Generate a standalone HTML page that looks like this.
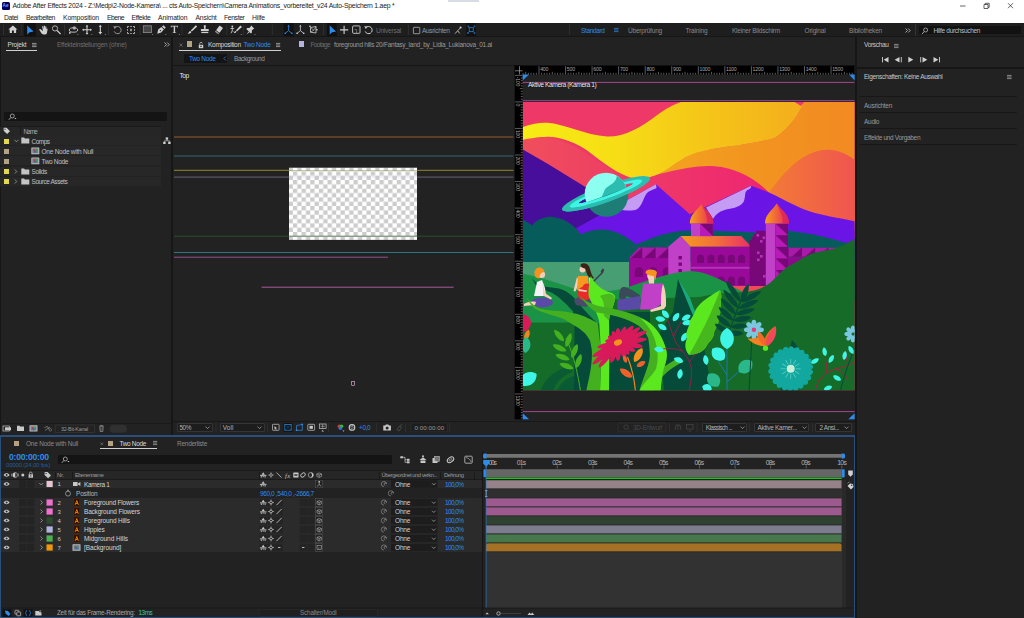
<!DOCTYPE html>
<html><head><meta charset="utf-8">
<style>
html,body{margin:0;padding:0;}
body{width:1024px;height:618px;overflow:hidden;position:relative;background:#161616;font-family:"Liberation Sans",sans-serif;font-size:6.7px;color:#b4b4b4;}
.a{position:absolute;}
.t{position:absolute;white-space:pre;line-height:8px;height:8px;}
.p{position:absolute;background:#222222;}
svg{position:absolute;overflow:visible;}
</style></head><body>
<div class="a" style="left:0;top:0;width:1024px;height:23px;background:#fff;"></div>
<div class="a" style="left:448px;top:0;width:31px;height:1.5px;background:#d9dce6;"></div>
<div class="a" style="left:1.5px;top:1.5px;width:8px;height:8px;background:#00005b;border-radius:1.5px;"></div>
<div class="t" style="left:2.60px;top:2.10px;color:#9999ff;font-size:4.60px;letter-spacing:0.062px;font-weight:700;">Ae</div>
<div class="t" style="left:12.50px;top:2.10px;color:#1a1a1a;font-size:6.80px;letter-spacing:-0.204px;">Adobe After Effects 2024 - Z:\Medp\2-Node-Kamera\ ... cts Auto-Speichern\Camera Animations_vorbereitet_v24 Auto-Speichern 1.aep *</div>
<svg style="left:955px;top:0" width="69" height="12" viewBox="0 0 69 12"><path d="M5 6H10.5" stroke="#222" stroke-width="0.7" fill="none"/><path d="M29 4.5h4v4h-4z M30.2 4.5v-1.2h4v4h-1.2" stroke="#222" stroke-width="0.7" fill="none"/><path d="M53 3.2l5 5M58 3.2l-5 5" stroke="#222" stroke-width="0.7" fill="none"/></svg>
<div class="t" style="left:4.00px;top:14.00px;color:#1a1a1a;font-size:6.80px;letter-spacing:-0.375px;">Datei</div>
<div class="t" style="left:26.00px;top:14.00px;color:#1a1a1a;font-size:6.80px;letter-spacing:-0.389px;">Bearbeiten</div>
<div class="t" style="left:63.00px;top:14.00px;color:#1a1a1a;font-size:6.80px;letter-spacing:-0.128px;">Komposition</div>
<div class="t" style="left:107.00px;top:14.00px;color:#1a1a1a;font-size:6.80px;letter-spacing:-0.531px;">Ebene</div>
<div class="t" style="left:131.50px;top:14.00px;color:#1a1a1a;font-size:6.80px;letter-spacing:-0.292px;">Effekte</div>
<div class="t" style="left:158.00px;top:14.00px;color:#1a1a1a;font-size:6.80px;letter-spacing:-0.082px;">Animation</div>
<div class="t" style="left:195.50px;top:14.00px;color:#1a1a1a;font-size:6.80px;letter-spacing:-0.185px;">Ansicht</div>
<div class="t" style="left:224.00px;top:14.00px;color:#1a1a1a;font-size:6.80px;letter-spacing:-0.364px;">Fenster</div>
<div class="t" style="left:252.00px;top:14.00px;color:#1a1a1a;font-size:6.80px;letter-spacing:-0.122px;">Hilfe</div>
<div class="a" style="left:0;top:23px;width:1024px;height:12.700px;background:#1e1e1e;"></div>
<svg style="left:0;top:23px" width="1024" height="14" viewBox="0 23 1024 14"><path d="M3.5 24.5V35" stroke="#3a3a3a" stroke-width="0.6"/><path d="M21.7 24.5V35" stroke="#3a3a3a" stroke-width="0.6"/><path d="M64.5 24.5V35" stroke="#3a3a3a" stroke-width="0.6"/><path d="M108.5 24.5V35" stroke="#3a3a3a" stroke-width="0.6"/><path d="M140.0 24.5V35" stroke="#3a3a3a" stroke-width="0.6"/><path d="M182.0 24.5V35" stroke="#3a3a3a" stroke-width="0.6"/><path d="M226.8 24.5V35" stroke="#3a3a3a" stroke-width="0.6"/><path d="M243.6 24.5V35" stroke="#3a3a3a" stroke-width="0.6"/><path d="M272.3 24.5V35" stroke="#3a3a3a" stroke-width="0.6"/><path d="M323.5 24.5V35" stroke="#3a3a3a" stroke-width="0.6"/><path d="M408.4 24.5V35" stroke="#3a3a3a" stroke-width="0.6"/><path d="M12.9 25.6L8.4 29.6H9.7V33.1H11.9V30.6H13.9V33.1H16.1V29.6H17.4Z" fill="#d0d0d0"/><rect x="24" y="23" width="12" height="13.3" fill="#111"/><path d="M27.2 25.4V34.4L29.6 32.3L33.6 31.6Z" fill="#2d8ceb"/><path d="M40.6 29.3c-.6-.6-1.6-.2-1.2.8l2 3.2c.5.8 1.3 1.1 2.2 1.1h1.6c1 0 1.6-.7 1.8-1.6l.6-3.6c.1-.8-.9-1-1.1-.2l-.2 1 .1-3.200c0-.8-1.100-.8-1.100 0l-.1 2.200-.3-3c-.1-.8-1.100-.7-1.100 .1l.1 2.900-.7-2.500c-.2-.8-1.200-.5-1 .3l.8 4.200z" fill="#d0d0d0"/><circle cx="55" cy="28.4" r="2.6" fill="none" stroke="#d0d0d0" stroke-width="0.8"/><path d="M57 30.500L60.600 34" stroke="#d0d0d0" stroke-width="1.100"/><ellipse cx="73.5" cy="30" rx="4.2" ry="2.2" fill="none" stroke="#d0d0d0" stroke-width="0.900"/><circle cx="74.300" cy="28" r="1.700" fill="#aaa"/><path d="M69 31.500l.2 2.400 2.200-1z" fill="#d0d0d0"/><path d="M78.200 33.700v1.200h-1.200z" fill="#999"/><path d="M87 25.600V34M82.800 29.800H91.200" stroke="#d0d0d0" stroke-width="1.100"/><path d="M87 24.900l1.400 1.700h-2.800zM87 34.700l1.400-1.700h-2.800zM82.100 29.800l1.700-1.400v2.800zM91.900 29.800l-1.700-1.400v2.800z" fill="#d0d0d0"/><path d="M92.200 33.700v1.200h-1.200z" fill="#999"/><path d="M100.300 26V33" stroke="#d0d0d0" stroke-width="1.100"/><path d="M100.300 24.800l1.600 2h-3.200zM100.300 34.400l1.900-2.300h-3.800z" fill="#d0d0d0"/><path d="M105.700 33.700v1.200h-1.200z" fill="#999"/><path d="M114.600 28A3.600 3.600 0 1 1 114.200 31.400" fill="none" stroke="#a0a0a0" stroke-width="0.900"/><path d="M113.200 26.300l2.900 .1-1.100 2.600z" fill="#a0a0a0"/><path d="M127.500 26.500h1.500M130.200 26.500h1.600M133 26.500h1.500v1.500M134.500 29.200v1.600M134.500 32v1.500H133M131.800 33.500h-1.600M129 33.500h-1.500V32M127.500 30.800v-1.600M127.500 28v-1.500" stroke="#d0d0d0" stroke-width="0.800" fill="none"/><path d="M131 28.200l.9 1.800-0.900 1.800-.9-1.800z" fill="#d0d0d0"/><rect x="143.300" y="25.800" width="8.200" height="6.800" fill="#454545" stroke="#8c8c8c" stroke-width="0.800"/><path d="M152.800 33.700v1.200h-1.200z" fill="#999"/><path d="M157.200 33.800l1-4.200 3.200-2.600 2.400 2.400-2.600 3.200z" fill="#d0d0d0"/><path d="M162 26.400l1.400-1.200 2.300 2.300-1.200 1.400z" fill="#d0d0d0"/><circle cx="160.400" cy="30.600" r=".7" fill="#1d1d1d"/><path d="M166.200 33.700v1.200h-1.200z" fill="#999"/><path d="M170.800 25.700h7.200v1.800h-.6l-.3-.9h-2v5.800l1 .2v.5h-3.400v-.5l1-.2v-5.800h-2l-.3 .9h-.6z" fill="#d0d0d0"/><path d="M179.800 33.700v1.200h-1.200z" fill="#999"/><path d="M195.800 25.200l-5 5.400 1 1 5.400-5z" fill="#d0d0d0"/><path d="M190.300 31.100c-1.200 .2-1.300 1.600-2.600 2.500 1.600 .3 3.400-.3 3.600-1.500z" fill="#d0d0d0"/><path d="M203.700 25.300h2.200l-.4 3.700h3.200v1.900h-7.800v-1.900h3.200z" fill="#d0d0d0"/><rect x="201.300" y="31.800" width="7" height="1.300" fill="#d0d0d0"/><path d="M219.600 25.400l3.400 2.500-3.500 4.800-3.400-2.500z" fill="#d0d0d0"/><path d="M215.700 30.800l3.400 2.500-.8 1-3.400-2.500z" fill="#999"/><path d="M240.400 25.400l-4.500 5.200 .9 .8 5.200-4.500z" fill="#d0d0d0"/><path d="M235.500 31c-1 .2-1 1.300-2 2 1.300 .2 2.700-.2 2.800-1.200z" fill="#d0d0d0"/><circle cx="232.300" cy="26.400" r=".9" fill="#d0d0d0"/><path d="M230.400 28.500h3.800M232.300 27.300v3.200l-1.300 2.800M232.300 30.500l1 1.200" stroke="#d0d0d0" stroke-width=".8" fill="none"/><path d="M241.600 33.700v1.200h-1.200z" fill="#999"/><path d="M251 25.300l3.400 3.400-1 .3-1.600 1.600 .1 2-1 .9-4.600-4.600 .9-1 2 .1 1.600-1.600z" fill="#d0d0d0"/><path d="M248.700 31.400l-1.800 2.400 .2 .2 2.400-1.800z" fill="#d0d0d0"/><path d="M255.400 33.700v1.200h-1.200z" fill="#999"/><rect x="283.700" y="23" width="9.900" height="13.300" fill="#111"/><path d="M288.6 26.200V30.600L285.4 33.300M288.6 30.600L291.8 33.300" stroke="#2d8ceb" stroke-width=".8" fill="none"/><path d="M288.6 24.700l1.200 1.700h-2.400z" fill="#2d8ceb"/><rect x="284.6" y="32.600" width="1.400" height="1.400" fill="#2d8ceb"/><rect x="291.2" y="32.600" width="1.400" height="1.400" fill="#2d8ceb"/><path d="M300.4 26.200V30.600L297.2 33.300M300.4 30.600L303.6 33.300" stroke="#d0d0d0" stroke-width=".8" fill="none"/><path d="M300.4 24.700l1.200 1.700h-2.400z" fill="#d0d0d0"/><rect x="296.4" y="32.600" width="1.400" height="1.400" fill="#d0d0d0"/><rect x="303.0" y="32.600" width="1.400" height="1.400" fill="#d0d0d0"/><path d="M310.500 27.500l5.500-1v6.500l-5.500-.8z" fill="none" stroke="#d0d0d0" stroke-width=".8"/><path d="M310.500 27.500l3.300 2.700 2.200-3.700M310.500 32.200l3.300-2" stroke="#d0d0d0" stroke-width=".6" fill="none"/><rect x="309.200" y="25.600" width="1.400" height="1.400" fill="#d0d0d0"/><rect x="316.200" y="29" width="1.400" height="1.400" fill="#d0d0d0"/><rect x="327" y="23" width="9.700" height="13.300" fill="#111"/><path d="M329.700 25.400V34.400L332.100 32.300L336 31.600Z" fill="#2d8ceb"/><path d="M344.100 25.800V34M340 29.900H348.200" stroke="#d0d0d0" stroke-width="1.100"/><rect x="352.600" y="25.900" width="7.400" height="7.400" rx=".8" fill="none" stroke="#d0d0d0" stroke-width=".9"/><path d="M354.600 29.600h2v3.400" stroke="#999" stroke-width=".6" fill="none"/><path d="M365.600 28A3.600 3.600 0 1 1 365.200 31.400" fill="none" stroke="#d0d0d0" stroke-width="1"/><path d="M364.200 26.300l2.900 .1-1.100 2.600z" fill="#d0d0d0"/><rect x="413.400" y="27.300" width="6.400" height="6.400" rx=".6" fill="none" stroke="#b0b0b0" stroke-width=".8"/><path d="M455 33.700l2.700-3 2 2.700M457.700 30.700l2.600-2.700" stroke="#d0d0d0" stroke-width=".8" fill="none"/><circle cx="460.600" cy="27.600" r="1" fill="#d0d0d0"/><rect x="466" y="23" width="10" height="13.300" fill="#111"/><rect x="469.200" y="27.700" width="4" height="4" fill="none" stroke="#2d8ceb" stroke-width=".700"/><path d="M467.800 26.300l1.400 1.400M474.600 26.300l-1.400 1.400M467.800 33.100l1.400-1.400M474.600 33.100l-1.400-1.400" stroke="#2d8ceb" stroke-width=".700"/><path d="M467.400 25.900h1.300v1.300M475 25.900h-1.300M475 25.900v1.300M467.400 33.500h1.300M467.400 33.500v-1.300M475 33.500h-1.300M475 33.500v-1.300" stroke="#2d8ceb" stroke-width=".6" fill="none"/></svg>
<div class="t" style="left:376.00px;top:26.80px;color:#6e6e6e;font-size:6.50px;letter-spacing:-0.233px;">Universal</div>
<div class="t" style="left:422.00px;top:26.80px;color:#9a9a9a;font-size:6.50px;letter-spacing:-0.312px;">Ausrichten</div>
<div class="a" style="left:569px;top:24px;width:.6px;height:11px;background:#2c2c2c"></div>
<div class="t" style="left:581.00px;top:26.80px;color:#2d8ceb;font-size:6.50px;letter-spacing:-0.361px;">Standard</div>
<svg style="left:613.500px;top:28.300px" width="5" height="4" viewBox="0 0 5 4"><path d="M0 .4h4.500M0 2h4.500M0 3.600h4.500" stroke="#2d8ceb" stroke-width=".7"/></svg>
<div class="t" style="left:628.00px;top:26.80px;color:#8a8a8a;font-size:6.50px;letter-spacing:-0.195px;">Überprüfung</div>
<div class="t" style="left:685.50px;top:26.80px;color:#8a8a8a;font-size:6.50px;letter-spacing:-0.156px;">Training</div>
<div class="t" style="left:732.00px;top:26.80px;color:#8a8a8a;font-size:6.50px;letter-spacing:-0.224px;">Kleiner Bildschirm</div>
<div class="t" style="left:804.50px;top:26.80px;color:#8a8a8a;font-size:6.50px;letter-spacing:-0.176px;">Original</div>
<div class="t" style="left:849.00px;top:26.80px;color:#8a8a8a;font-size:6.50px;letter-spacing:-0.202px;">Bibliotheken</div>
<svg style="left:905px;top:27.500px" width="6" height="5" viewBox="0 0 6 5"><path d="M.5 .5l2 2-2 2M3.200 .5l2 2-2 2" stroke="#c8c8c8" stroke-width=".8" fill="none"/></svg>
<div class="a" style="left:914.500px;top:24px;width:.6px;height:12px;background:#333"></div>
<div class="a" style="left:918.500px;top:26px;width:102px;height:8.300px;background:#121212;border-radius:1px;"></div>
<svg style="left:921px;top:26.500px" width="8" height="8" viewBox="0 0 8 8"><circle cx="4.600" cy="3" r="2" fill="none" stroke="#c8c8c8" stroke-width=".7"/><path d="M3.200 4.500L1 7" stroke="#c8c8c8" stroke-width=".8"/></svg>
<div class="t" style="left:933.50px;top:26.80px;color:#c0c0c0;font-size:6.50px;letter-spacing:-0.325px;">Hilfe durchsuchen</div>
<div class="p" style="left:1px;top:37px;width:170px;height:397.500px;"></div>
<div class="t" style="left:7.50px;top:41.30px;color:#d8d8d8;font-size:6.50px;letter-spacing:-0.205px;">Projekt</div>
<svg style="left:32.300px;top:43px" width="5" height="4" viewBox="0 0 5 4"><path d="M0 .4h4.600M0 2h4.600M0 3.600h4.600" stroke="#c0c0c0" stroke-width=".7"/></svg>
<div class="a" style="left:6.300px;top:50px;width:30.700px;height:1px;background:#d0d0d0;"></div>
<div class="t" style="left:57.00px;top:41.30px;color:#6e6e6e;font-size:6.50px;letter-spacing:-0.227px;">Effekteinstellungen (ohne)</div>
<svg style="left:163.500px;top:41.800px" width="6" height="5" viewBox="0 0 6 5"><path d="M.5 .5l2 2-2 2M3.200 .5l2 2-2 2" stroke="#c8c8c8" stroke-width=".8" fill="none"/></svg>
<div class="a" style="left:4.300px;top:112px;width:163px;height:9.300px;background:#141414;border-radius:1px;"></div>
<svg style="left:7.500px;top:113px" width="10" height="8" viewBox="0 0 10 8"><circle cx="4.300" cy="3" r="2" fill="none" stroke="#c8c8c8" stroke-width=".7"/><path d="M2.900 4.500L.8 6.800" stroke="#c8c8c8" stroke-width=".8"/><path d="M6.300 5l1.100 1.200 1.100-1.200z" fill="#c8c8c8"/></svg>
<div class="a" style="left:0;top:126px;width:160.700px;height:9.500px;background:#262626;border-top:.5px solid #1a1a1a;border-bottom:.5px solid #1a1a1a;"></div>
<svg style="left:3px;top:127px" width="8" height="8" viewBox="0 0 8 8"><path d="M.6 .8h3l3.400 3.400-2.900 2.900L.7 3.700z" fill="#d0d0d0"/><circle cx="2" cy="2.200" r=".6" fill="#232323"/></svg>
<div class="a" style="left:20.200px;top:127px;width:.6px;height:8px;background:#1a1a1a"></div>
<div class="t" style="left:23.50px;top:127.60px;color:#a8a8a8;font-size:6.30px;letter-spacing:-0.824px;">Name</div>
<div class="a" style="left:0;top:136.3px;width:160.700px;height:9.200px;background:#272727;"></div>
<div class="a" style="left:3.600px;top:138.5px;width:5px;height:5px;background:#e4d84c;"></div>
<svg style="left:14px;top:139.2px" width="5" height="4" viewBox="0 0 5 4"><path d="M.5 .8l2 2 2-2" stroke="#b0b0b0" stroke-width=".7" fill="none"/></svg>
<svg style="left:21px;top:137.4px" width="9" height="7" viewBox="0 0 9 7"><path d="M.3 .6h2.800l.8 .9h4.400v5H.3z" fill="#c4c4c4"/></svg>
<div class="t" style="left:31.50px;top:137.60px;color:#c0c0c0;font-size:6.50px;letter-spacing:-0.519px;">Comps</div>
<div class="a" style="left:0;top:146.3px;width:160.700px;height:9.200px;background:#272727;"></div>
<div class="a" style="left:3.600px;top:148.5px;width:5px;height:5px;background:#b3a384;"></div>
<svg style="left:31px;top:147.1px" width="9" height="8" viewBox="0 0 9 8"><rect x=".3" y=".4" width="8" height="6.800" rx=".5" fill="#bdbdbd"/><rect x="1.300" y="1.400" width="6" height="4.800" fill="#6d7d8c"/><circle cx="3.500" cy="3.300" r="1.100" fill="#d33"/><circle cx="5" cy="3.300" r="1.100" fill="#3a3"/><circle cx="4.300" cy="4.600" r="1.100" fill="#36c"/></svg>
<div class="t" style="left:41.50px;top:147.60px;color:#c0c0c0;font-size:6.50px;letter-spacing:-0.233px;">One Node with Null</div>
<div class="a" style="left:0;top:156.3px;width:160.700px;height:9.200px;background:#272727;"></div>
<div class="a" style="left:3.600px;top:158.5px;width:5px;height:5px;background:#b3a384;"></div>
<svg style="left:31px;top:157.1px" width="9" height="8" viewBox="0 0 9 8"><rect x=".3" y=".4" width="8" height="6.800" rx=".5" fill="#bdbdbd"/><rect x="1.300" y="1.400" width="6" height="4.800" fill="#6d7d8c"/><circle cx="3.500" cy="3.300" r="1.100" fill="#d33"/><circle cx="5" cy="3.300" r="1.100" fill="#3a3"/><circle cx="4.300" cy="4.600" r="1.100" fill="#36c"/></svg>
<div class="t" style="left:41.50px;top:157.60px;color:#c0c0c0;font-size:6.50px;letter-spacing:-0.348px;">Two Node</div>
<div class="a" style="left:0;top:166.6px;width:160.700px;height:9.200px;background:#272727;"></div>
<div class="a" style="left:3.600px;top:168.8px;width:5px;height:5px;background:#e4d84c;"></div>
<svg style="left:14.300px;top:168.8px" width="4" height="5" viewBox="0 0 4 5"><path d="M.8 .5l2 2-2 2" stroke="#b0b0b0" stroke-width=".7" fill="none"/></svg>
<svg style="left:21px;top:167.7px" width="9" height="7" viewBox="0 0 9 7"><path d="M.3 .6h2.800l.8 .9h4.400v5H.3z" fill="#c4c4c4"/></svg>
<div class="t" style="left:31.50px;top:167.90px;color:#c0c0c0;font-size:6.50px;letter-spacing:-0.403px;">Solids</div>
<div class="a" style="left:0;top:176.7px;width:160.700px;height:9.200px;background:#272727;"></div>
<div class="a" style="left:3.600px;top:178.9px;width:5px;height:5px;background:#e4d84c;"></div>
<svg style="left:14.300px;top:178.9px" width="4" height="5" viewBox="0 0 4 5"><path d="M.8 .5l2 2-2 2" stroke="#b0b0b0" stroke-width=".7" fill="none"/></svg>
<svg style="left:21px;top:177.8px" width="9" height="7" viewBox="0 0 9 7"><path d="M.3 .6h2.800l.8 .9h4.400v5H.3z" fill="#c4c4c4"/></svg>
<div class="t" style="left:31.50px;top:178.00px;color:#c0c0c0;font-size:6.50px;letter-spacing:-0.443px;">Source Assets</div>
<svg style="left:162.500px;top:137px" width="8" height="8" viewBox="0 0 8 8"><rect x="2.700" y=".4" width="2.400" height="2.300" fill="#d0d0d0"/><rect x=".2" y="4.700" width="2.400" height="2.300" fill="#d0d0d0"/><rect x="5.200" y="4.700" width="2.400" height="2.300" fill="#d0d0d0"/><path d="M3.900 2.700v1.200M1.400 4.700v-.9h5v.9" stroke="#d0d0d0" stroke-width=".6" fill="none"/></svg>
<div class="a" style="left:0;top:423px;width:171px;height:.6px;background:#1a1a1a"></div>
<svg style="left:0;top:423px" width="171" height="11" viewBox="0 423 171 11"><rect x="3" y="426" width="6.500" height="5" fill="none" stroke="#c8c8c8" stroke-width=".7"/><rect x="5" y="427.300" width="6" height="3" fill="#c8c8c8"/><path d="M17 425.800h2.500l.7 .8h3.800v4.400h-7z" fill="#c8c8c8"/><rect x="29.500" y="425.300" width="8" height="6.300" rx=".5" fill="#bdbdbd"/><rect x="30.500" y="426.300" width="6" height="4.300" fill="#6d7d8c"/><circle cx="32.700" cy="428" r="1" fill="#d33"/><circle cx="34.200" cy="428" r="1" fill="#3a3"/><circle cx="33.500" cy="429.300" r="1" fill="#36c"/><path d="M44.500 427.500l3-1 1.200 2.500M45 430.500l5-3.500" stroke="#8a8a8a" stroke-width=".7" fill="none"/><circle cx="50.300" cy="429.800" r="1.300" fill="none" stroke="#8a8a8a" stroke-width=".6"/><rect x="55.200" y="425" width="39.600" height="7.400" fill="none" stroke="#3a3a3a" stroke-width=".6"/><path d="M99.200 426.300h4.600M100.500 426.300v-.8h2v.8M99.800 426.800l.4 4.700h2.600l.4-4.700" stroke="#9a9a9a" stroke-width=".7" fill="none"/><path d="M100.900 427.300v3.500M102.100 427.300v3.500" stroke="#9a9a9a" stroke-width=".4"/><rect x="109.500" y="424.700" width="17.500" height="8" rx="4" fill="#303030"/></svg>
<div class="t" style="left:61.00px;top:425.30px;color:#9a9a9a;font-size:5.30px;letter-spacing:-0.180px;">32-Bit-Kanal</div>
<div class="p" style="left:173.200px;top:37px;width:681.800px;height:397.500px;"></div>
<div class="a" style="left:173.200px;top:64.900px;width:681.800px;height:1px;background:#161616;"></div>
<svg style="left:178.800px;top:43.300px" width="4" height="4" viewBox="0 0 4 4"><path d="M.5 .5l3 3M3.500 .5l-3 3" stroke="#8a8a8a" stroke-width=".6"/></svg>
<div class="a" style="left:186.800px;top:41.400px;width:5.600px;height:5.600px;background:#b3a384;"></div>
<svg style="left:197.500px;top:41.500px" width="6" height="7" viewBox="0 0 6 7"><rect x=".8" y="2.800" width="4.400" height="3.400" fill="#d0d0d0"/><path d="M1.700 2.800v-1.200a1.300 1.300 0 0 1 2.600 0" stroke="#d0d0d0" stroke-width=".7" fill="none"/><rect x="2.400" y="3.700" width="1.200" height="1.400" fill="#1f1f1f"/></svg>
<div class="t" style="left:208.00px;top:41.30px;color:#d8d8d8;font-size:6.50px;letter-spacing:-0.271px;">Komposition</div>
<div class="t" style="left:243.50px;top:41.30px;color:#2d8ceb;font-size:6.50px;letter-spacing:-0.285px;">Two Node</div>
<svg style="left:275.800px;top:43px" width="5" height="4" viewBox="0 0 5 4"><path d="M0 .4h4.200M0 2h4.200M0 3.600h4.200" stroke="#c0c0c0" stroke-width=".7"/></svg>
<div class="a" style="left:179px;top:50px;width:101.500px;height:1px;background:#d0d0d0;"></div>
<div class="a" style="left:298.800px;top:41.400px;width:5.600px;height:5.600px;background:#b4b4e0;"></div>
<div class="t" style="left:310.50px;top:41.30px;color:#6e6e6e;font-size:6.50px;letter-spacing:-0.623px;">Footage</div>
<div class="t" style="left:334.00px;top:41.30px;color:#9a9a9a;font-size:6.50px;letter-spacing:-0.265px;">foreground hills 20/Fantasy_land_by_Lidia_Lukianova_01.ai</div>
<div class="a" style="left:183.500px;top:53.700px;width:43.500px;height:9px;background:#141414;"></div>
<div class="t" style="left:189.00px;top:54.70px;color:#2d8ceb;font-size:6.50px;letter-spacing:-0.348px;">Two Node</div>
<svg style="left:222.500px;top:55.800px" width="4" height="5" viewBox="0 0 4 5"><path d="M2.800 .5l-2 2 2 2" stroke="#2d8ceb" stroke-width=".7" fill="none"/></svg>
<div class="t" style="left:234.00px;top:54.70px;color:#9a9a9a;font-size:6.50px;letter-spacing:-0.420px;">Background</div>
<div class="t" style="left:179.50px;top:72.30px;color:#f0f0f0;font-size:6.60px;letter-spacing:-0.447px;text-shadow:0 0 .8px #000;">Top</div>
<svg style="left:0;top:0" width="1024" height="618" viewBox="0 0 1024 618"><defs><pattern id="ck" x="292.900" y="171.400" width="8.660" height="8.660" patternUnits="userSpaceOnUse"><rect width="8.660" height="8.660" fill="#fff"/><rect width="4.330" height="4.330" fill="#ccc"/><rect x="4.330" y="4.330" width="4.330" height="4.330" fill="#ccc"/></pattern></defs><path d="M174.0 137.0H513.5" stroke="#b5682d" stroke-width=".800"/><path d="M174.0 156.0H513.5" stroke="#2f7f88" stroke-width=".800"/><path d="M174.0 170.3H513.5" stroke="#a9a432" stroke-width=".800"/><path d="M174.0 177.1H513.5" stroke="#747488" stroke-width=".800"/><rect x="289" y="167.700" width="128" height="72.200" fill="url(#ck)"/><path d="M289 170.500H417" stroke="#8a9a3a" stroke-width=".6" opacity=".8"/><path d="M289 177H417" stroke="#b0b0d0" stroke-width=".6" opacity=".5"/><path d="M289 236.200H417" stroke="#2c5a2e" stroke-width=".8" opacity=".9"/><path d="M174 236.2H289M417 236.2H513.500" stroke="#2c5a2e" stroke-width=".8"/><path d="M174.0 252.5H513.5" stroke="#2d8c98" stroke-width=".800"/><path d="M174.0 257.2H388.0" stroke="#b45aa8" stroke-width=".800"/><path d="M261.5 287.2H453.6" stroke="#c966bd" stroke-width=".800"/><rect x="351.700" y="381.300" width="2.600" height="4" fill="#2a1a2a" stroke="#e8c8e0" stroke-width=".6"/></svg>
<svg style="left:0;top:0" width="1024" height="618" viewBox="0 0 1024 618"><defs>
<clipPath id="ic"><rect x="522.8" y="101.900" width="331.800" height="288.300"/></clipPath>
<linearGradient id="gy" gradientUnits="userSpaceOnUse" x1="523" y1="0" x2="810" y2="0"><stop offset="0" stop-color="#f7ec14"/><stop offset=".3" stop-color="#f6df15"/><stop offset=".6" stop-color="#f5c818"/><stop offset="1" stop-color="#f3ac1d"/></linearGradient>
<linearGradient id="go" gradientUnits="userSpaceOnUse" x1="640" y1="0" x2="855" y2="0"><stop offset="0" stop-color="#f3a61e"/><stop offset=".5" stop-color="#f29520"/><stop offset="1" stop-color="#f28a22"/></linearGradient>
<linearGradient id="gc" gradientUnits="userSpaceOnUse" x1="770" y1="0" x2="855" y2="0"><stop offset="0" stop-color="#f27a36"/><stop offset="1" stop-color="#f05550"/></linearGradient>
<linearGradient id="gp" gradientUnits="userSpaceOnUse" x1="523" y1="0" x2="760" y2="0"><stop offset="0" stop-color="#f04e5c"/><stop offset=".5" stop-color="#ee3a66"/><stop offset="1" stop-color="#ee2672"/></linearGradient>
<linearGradient id="gd" gradientUnits="userSpaceOnUse" x1="0" y1="0" x2="1" y2="0" gradientTransform="translate(690 0) scale(24 1)"><stop offset="0" stop-color="#f5a01e"/><stop offset=".5" stop-color="#f0603c"/><stop offset="1" stop-color="#e62660"/></linearGradient>
<linearGradient id="gd2" gradientUnits="userSpaceOnUse" x1="765" y1="0" x2="789" y2="0"><stop offset="0" stop-color="#f5a01e"/><stop offset=".5" stop-color="#f0603c"/><stop offset="1" stop-color="#e62660"/></linearGradient>
<linearGradient id="gr" gradientUnits="userSpaceOnUse" x1="681" y1="0" x2="751" y2="0"><stop offset="0" stop-color="#f59a20"/><stop offset=".5" stop-color="#f2703a"/><stop offset="1" stop-color="#ea2e68"/></linearGradient>
<pattern id="tri" x="775.5" y="223.600" width="12.500" height="11.600" patternUnits="userSpaceOnUse"><rect width="12.500" height="11.600" fill="#b81ab8"/><path d="M0 0H12.500V11.600Z" fill="#780878"/></pattern>
<pattern id="tri2" x="629" y="247.300" width="13.300" height="10.700" patternUnits="userSpaceOnUse"><rect width="13.300" height="10.700" fill="#a81aa8"/><path d="M13.300 0V10.700H2Z" fill="#780878"/></pattern>
</defs><g clip-path="url(#ic)"><rect x="522" y="101" width="334" height="290" fill="#ee3968"/><path d="M522 139C535 136 548 136 560 140C585 150 600 165 625 177C645 180 660 174 675 171C690 167 705 165 715 166.300C735 168 755 178 769 192.500L760 215H522Z" fill="url(#gp)"/><path d="M659 174C672 168 680 158 697 152C720 146 745 146 775 138C790 128 800 112 804.600 101H856V230H770L769 192.500C755 178 735 168 715 166.300C700 165 685 168 659 174Z" fill="url(#go)"/><path d="M769 192.500C780 178 800 150 828 149.800C840 150 850 156 856 161V225C835 218 815 216 800 208C785 200 775 196 769 192.500Z" fill="url(#gc)"/><path d="M522 127.300C530 124 540 122.300 547 122.800C565 124 585 135 607 136.600C625 137 640 128 660 113C670 106 678 103 684 101H804.600C800 112 792 126 775 138C745 146 720 146 697 152.500C680 158 672 168 659 174C650 178 640 179 630 177.500C610 170 598 158 585 149C570 140 555 136 545 137C535 137 528 139 522 140Z" fill="url(#gy)"/><path d="M793 101l8 5 4-5z" fill="#ee3968"/><path d="M522 149L548 164L600 196L640 212V250H522Z" fill="#470e9c"/><path d="M560 237.100L656 184.300L689.800 214.300L751.200 185.700L769 192.500C785 200 800 209 815 213C830 217 845 219 856 221.500V260H560Z" fill="#6a14e6"/><path d="M656 184.300L618 205.200V209C624 210.500 632 211.500 636.500 209.500C642 206.500 643 199 646.300 194C649 190.500 653 190 656.500 188Z" fill="#c49cf4"/><path d="M751.200 185.700L706 207.500L713 219C716 214 720 211 726 209.500C733 208.500 740 207 743.500 202C746 197 744 192 747.500 190C750 189 751.200 188 751.200 185.700Z" fill="#c49cf4"/><g transform="rotate(-19.800 606 193.800)"><path fill-rule="evenodd" d="M559.300 193.800a46.700 8.400 0 1 0 93.400 0a46.700 8.400 0 1 0-93.400 0zM577 193.300a29 2.600 0 1 0 58 0a29 2.600 0 1 0-58 0z" fill="#2dbdb0"/><path fill-rule="evenodd" d="M567.500 193.500a38.500 5.300 0 1 0 77 0a38.500 5.300 0 1 0-77 0zM577 193.300a29 2.600 0 1 0 58 0a29 2.600 0 1 0-58 0z" fill="#3ef5e6"/></g><circle cx="606" cy="194" r="21.300" fill="#8cfff0"/><path d="M616.800 175.700A21.300 21.300 0 0 1 606 215.300A21.300 21.300 0 0 1 590 208L598 200.400C602 199 602 195 603.900 191.900C605 188 608 186.500 611 184.500C614 182.500 616.500 180 616.800 175.700Z" fill="#2dbdb0"/><path d="M586.300 202.500A21.300 21.300 0 0 0 627 188Z" fill="#1f7d78"/><g transform="rotate(-19.800 606 193.800)"><path d="M559.300 193.800A46.700 8.400 0 0 0 652.700 193.800L644.500 193.500A38.500 5.300 0 0 1 567.500 193.500Z" fill="#2dbdb0"/><path d="M567.500 193.500A38.500 5.300 0 0 0 644.500 193.500L635 193.300A29 2.600 0 0 1 577 193.300Z" fill="#3ef5e6"/></g><path d="M522 219C526 221 530 224 532 225.400C537 219 545 216.500 553 216.900C565 218 575 226 581 234.300C588 231 595 229.300 603 229.500C617 230 628 238 636.400 244.500C650 238 665 233 680 231C700 229.500 730 231 757 232.500L788 230.800C810 233 830 238 856 246V300H522Z" fill="#065c5a"/><rect x="522" y="262" width="240" height="60" fill="#479e72"/>
<rect x="788" y="247.700" width="60" height="9" fill="url(#tri2)"/><rect x="788" y="256.600" width="60" height="30" fill="#8c0a8c"/><rect x="629" y="247.300" width="40" height="10.700" fill="url(#tri2)"/><path d="M629 258L639 247.300H629Z" fill="#065c5a"/><rect x="629" y="258" width="40" height="32" fill="#9a0a9a"/><path d="M634.8 277v-5.500a4.200 4.200 0 0 1 8.400 0v5.500z" fill="#780878"/><path d="M648.8 277v-5.500a4.200 4.200 0 0 1 8.400 0v5.500z" fill="#780878"/><path d="M662.8 277v-5.500a4.200 4.200 0 0 1 8.400 0v5.500z" fill="#780878"/><path d="M680.800 236.100L668.300 246.800V292H690.600V246.800Z" fill="#c040c8"/><path d="M680.800 236.100H741.300L751.200 246.800H690.600Z" fill="url(#gr)"/><rect x="690.600" y="246.800" width="60.600" height="40" fill="#9a0a9a"/><rect x="690.600" y="266.800" width="60.600" height="2" fill="#b432b8"/><path d="M697.0 263v-5a3.500 3.500 0 0 1 7 0v5z" fill="#780878"/><path d="M697.0 285v-5a3.500 3.500 0 0 1 7 0v5z" fill="#780878"/><path d="M707.5 263v-5a3.500 3.500 0 0 1 7 0v5z" fill="#780878"/><path d="M707.5 285v-5a3.500 3.500 0 0 1 7 0v5z" fill="#780878"/><path d="M717.7 263v-5a3.500 3.500 0 0 1 7 0v5z" fill="#780878"/><path d="M717.7 285v-5a3.500 3.500 0 0 1 7 0v5z" fill="#780878"/><path d="M727.9 263v-5a3.500 3.500 0 0 1 7 0v5z" fill="#780878"/><path d="M727.9 285v-5a3.500 3.500 0 0 1 7 0v5z" fill="#780878"/><path d="M738.1 263v-5a3.500 3.500 0 0 1 7 0v5z" fill="#780878"/><path d="M738.1 285v-5a3.500 3.500 0 0 1 7 0v5z" fill="#780878"/><rect x="678.500" y="256.0" width="3.400" height="3.400" fill="#780878"/><rect x="678.500" y="262.5" width="3.400" height="3.400" fill="#780878"/><rect x="678.500" y="269.0" width="3.400" height="3.400" fill="#780878"/><rect x="691" y="223.600" width="9" height="12.600" fill="#c040c8"/><rect x="700" y="223.600" width="12.800" height="12.600" fill="#b81ab8"/><path d="M700 223.600H712.800V236.100Z" fill="#780878"/><path d="M701.400 204C697 211 689.800 214 689.800 223.600H713.400C713.400 214 706 211 701.400 204Z" fill="url(#gd)"/><path d="M701.400 204C706 211 713.400 214 713.400 223.600H707C708 216 704 211 701.400 204Z" fill="#d92458" opacity=".75"/><path d="M749.500 290V239.700H751.500V236.700H753.800V233.700H756.300V230.800H766V290Z" fill="#780878"/><rect x="756.5" y="234.0" width="2.600" height="2.600" fill="#b432b8"/><rect x="760.0" y="240.0" width="2.600" height="2.600" fill="#b432b8"/><rect x="762.5" y="236.5" width="2.600" height="2.600" fill="#b432b8"/><rect x="757.0" y="251.5" width="2.600" height="2.600" fill="#b432b8"/><rect x="760.0" y="255.0" width="2.600" height="2.600" fill="#b432b8"/><rect x="757.0" y="258.5" width="2.600" height="2.600" fill="#b432b8"/><rect x="763.0" y="275.0" width="2.600" height="2.600" fill="#b432b8"/><rect x="765.800" y="223.600" width="9.700" height="70" fill="#c040c8"/><rect x="775.500" y="223.600" width="12.500" height="70" fill="url(#tri)"/><path d="M776.700 203.500C772 211 765 214 765 223.600H789C789 214 782 211 776.700 203.500Z" fill="url(#gd2)"/><path d="M776.700 203.500C782 211 789 214 789 223.600H782.500C783.500 216 779.500 211 776.700 203.500Z" fill="#d92458" opacity=".75"/><rect x="730" y="286" width="40" height="6" fill="#f04a5a"/><path d="M522 273.600C540 277 560 284 572 288C590 293 605 293 625 288C650 280 670 272 690 271C705 271 722 280 735 288L760 300V330H522Z" fill="#1a9346"/><path d="M856 238C848 243 842 246.500 835 248.500C825 251 818 251.500 811 254C802 258 795 263 788 266.500C780 272 776 278 770 283C763 288 755 291 745 292C730 293 715 293 700 297C690 300 682 306 675 312L660 340V392H856Z" fill="#156b27"/><path d="M522 322.500H573V392H522Z" fill="#146c28"/><path d="M573 323H600V300L700 297L680 392H573Z" fill="#146c28"/>
<path d="M531.700 277.700C535 282 539 285.500 543.400 286.300C549 287.500 554 287.500 559 288.600C564 290 568 292.500 571.600 295.600C576 299.500 580 304 582.500 308L590 316L596 322V392H574L574.600 326L573 311.300C570 308 567 304.500 563.800 301.900C560 298.500 556 295 551.300 292.500C546 290.500 540 288.500 535.600 284.700Z" fill="#064a3a"/><path d="M606 312H650V392H606Z" fill="#064a3a"/><path d="M540 392C545 378 556 369 572 366V372C562 376 556 382 553 392Z" fill="#0a5a34"/><path d="M556 392C560 384 566 378 574 376V392Z" fill="#0a5a34"/><ellipse cx="542" cy="302.500" rx="11" ry="5" fill="#5a4aa8"/><path d="M524 304c3-2 8-3 12-2l-1 3c-4 0-8 1-11 1z" fill="#f5d0b8"/><path d="M534 296l3-14 5-2 3 8 1 8z" fill="#f4f4f4"/><path d="M543 283l2 10 7 5-1 1.500-8-4z" fill="#f5d0b8"/><circle cx="541.500" cy="274.500" r="3.600" fill="#f5d0b8"/><path d="M534.500 274a5 5.500 0 0 1 10-2c-2 0-4 1-4.500 3l-1 3.500c-3-.5-4.500-2-4.500-4.500z" fill="#f5921e"/><path d="M574 300c2-3 8-4 14-2l4 4-6 5-10-2z" fill="#4a4a6a"/><path d="M577 277l-3.500 14 2 .500 4-10zM589 277l3 4-1 6-2-1z" fill="#f5d0b8"/><path d="M578 276h10l1 14h-12z" fill="#f59a20"/><circle cx="584.500" cy="293.500" r="7" fill="#e82a2a"/><circle cx="587" cy="288" r="4.500" fill="#e82a2a"/><path d="M589 286l13-13" stroke="#3a3a4a" stroke-width="1.400"/><path d="M600.500 272l2-3.500 1.800 1-1.500 4z" fill="#3a3a4a"/><path d="M579 289l8 1.500-.5 1.500-8-1z" fill="#f5d0b8"/><circle cx="582.500" cy="269.500" r="3" fill="#f5d0b8"/><path d="M581 264c4-2 8 0 9 5 1 4 2 7 4 9-3 1-6-1-7-4-1-3-1-6-4-6-2-1-3-2-2-4z" fill="#3a2418"/><path d="M619 298c0-6 1-10 4-11 3-.5 8 2 17 8l-2 5-12-4-1 6z" fill="#3a4a5a"/><path d="M617.500 300l23-4v13l-23 2z" fill="#5a4aa8"/><path d="M643 283.400h20l1 8-2 12-8 6h-14z" fill="#c040c8"/><path d="M663 284c2 4 3.500 12 3 22l-2 3-13 3-1-2 11-4c0-8 0-16 2-22z" fill="#f5d0b8"/><path d="M648 277l1 6.500h5l.5-6z" fill="#f5d0b8"/><circle cx="650.800" cy="275.800" r="3.600" fill="#f5d0b8"/><path d="M646 271c3-2 8-2 11 1l-1.500 8-2-4c-3 0-6-1-8-3z" fill="#f5921e"/><path d="M678 279L700 325L712 392H664L660 332L673 312Z" fill="#064a3a"/><path d="M678 279L690 298L700 325L694 318Z" fill="#1aa87a"/><path d="M526.300 297.300C530 302 534 306 539.400 308.400C546 310 552 310.500 558.800 310.900C566 311.500 572 312.500 578.300 314.300C582 315.500 585 316.500 588 318.200C592 320 595 321.500 597.700 323L601 351L600 392H586C590 375 592.500 362 591.800 350C591 345 590.500 343 589.900 340.500C588 337 586 334 583.100 331.700C580 329 577 327 573.400 325C570 323 567 321 563.700 319.100C559 317 554 316 549.100 314.300C544 312.500 539 311 534.600 308.400C531 305 528 301 526.300 297.300Z" fill="#44b020"/><path d="M590.800 276C594 283 600 288 606 291C612 293 616 294 615 299C614 306 610 312 609 320.500C609.500 340 609.500 360 609 392H600C601 370 601.500 350 599 320.500C596 310 590 300 588.700 296.300C588 290 589 283 590.800 276Z" fill="#5be81e"/><path d="M600 296C606 293 614 292 615 299C614 306 610 312 609 320.500L604 316C605 308 604 300 600 296Z" fill="#4ab81e"/><path d="M640 392C645 380 660 368 680 357L683 362C668 369 657 380 653 392Z" fill="#44b020"/><path d="M579 295C586 302 592 304.500 600.900 306.400C610 308 618 309.500 626.800 312.300C636 315 644 318.500 649.800 323C655 327.500 659.500 333 662 338.500C664.500 344 666.500 349 666.800 353.800C667 359 665.500 364 663.700 369C662 376 661 383 660.600 392H639C641 384 644.500 376 646.800 369C649 363 650 358 649.800 353.800C649.500 348 649 343 648.300 338.500C646 333 643 329 639 326C633 322 626 319 619 317C611 315 603 313.500 596 312.300C590 308 584 302 579 295Z" fill="#44b020"/><path d="M640 318C650 321 658 330 662 338.500C664.500 344 666.500 349 666.800 353.800C667 359 665.500 364 663.700 369C662 376 661 383 660.600 392H639C642 384 652 376 656 369C657.500 363 658 358 657.500 353.800C657 348 656 343 654.500 338.500C652 331 646 323 640 318Z" fill="#5be81e"/><path d="M580.700 392C578 375 574 355 566 338" stroke="#44b020" stroke-width="1" fill="none"/><path transform="translate(559.0 335.5) rotate(-40.0)" d="M0 -7.5C3.8 -3.8 3.3 5.0 0 7.5C-3.3 5.0 -3.8 -3.8 0 -7.5Z" fill="#44b020"/><path transform="translate(568.5 340.0) rotate(20.0)" d="M0 -7.5C3.8 -3.8 3.3 5.0 0 7.5C-3.3 5.0 -3.8 -3.8 0 -7.5Z" fill="#44b020"/><path transform="translate(559.5 347.8) rotate(-65.0)" d="M0 -7.5C3.8 -3.8 3.3 5.0 0 7.5C-3.3 5.0 -3.8 -3.8 0 -7.5Z" fill="#44b020"/><path transform="translate(574.6 351.0) rotate(22.0)" d="M0 -7.5C3.8 -3.8 3.3 5.0 0 7.5C-3.3 5.0 -3.8 -3.8 0 -7.5Z" fill="#44b020"/><path transform="translate(562.5 357.0) rotate(-70.0)" d="M0 -7.5C3.8 -3.8 3.3 5.0 0 7.5C-3.3 5.0 -3.8 -3.8 0 -7.5Z" fill="#44b020"/><path transform="translate(578.6 361.0) rotate(20.0)" d="M0 -7.5C3.8 -3.8 3.3 5.0 0 7.5C-3.3 5.0 -3.8 -3.8 0 -7.5Z" fill="#44b020"/><path transform="translate(566.5 366.0) rotate(-70.0)" d="M0 -7.5C3.8 -3.8 3.3 5.0 0 7.5C-3.3 5.0 -3.8 -3.8 0 -7.5Z" fill="#44b020"/><circle cx="522" cy="323" r="9" fill="#d81a5a"/><path transform="translate(527.0 335.0) rotate(20.0)" d="M0 -5.5C3.5 -2.8 3.0 3.7 0 5.5C-3.0 3.7 -3.5 -2.8 0 -5.5Z" fill="#f5821e"/><path transform="translate(526.0 345.0) rotate(5.0)" d="M0 -8.0C6.3 -4.0 5.4 5.3 0 8.0C-5.4 5.3 -6.3 -4.0 0 -8.0Z" fill="#2ab88a"/><path transform="translate(528.0 379.0) rotate(60.0)" d="M0 -10.0C9.1 -5.0 7.8 6.7 0 10.0C-7.8 6.7 -9.1 -5.0 0 -10.0Z" fill="#3ef5e6"/><ellipse transform="translate(618 343) rotate(-35)" cx="14.0" cy="0" rx="13.0" ry="2.700" fill="#d81a5a"/><ellipse transform="translate(618 343) rotate(-22)" cx="16.0" cy="0" rx="15.0" ry="2.700" fill="#d81a5a"/><ellipse transform="translate(618 343) rotate(-8)" cx="15.0" cy="0" rx="14.0" ry="2.700" fill="#d81a5a"/><ellipse transform="translate(618 343) rotate(8)" cx="13.0" cy="0" rx="12.0" ry="2.700" fill="#d81a5a"/><ellipse transform="translate(618 343) rotate(25)" cx="10.0" cy="0" rx="9.0" ry="2.700" fill="#d81a5a"/><ellipse transform="translate(618 343) rotate(45)" cx="8.5" cy="0" rx="7.5" ry="2.700" fill="#d81a5a"/><ellipse transform="translate(618 343) rotate(63)" cx="9.0" cy="0" rx="8.0" ry="2.700" fill="#d81a5a"/><ellipse transform="translate(618 343) rotate(90)" cx="9.5" cy="0" rx="8.5" ry="2.700" fill="#d81a5a"/><ellipse transform="translate(618 343) rotate(110)" cx="11.0" cy="0" rx="10.0" ry="2.700" fill="#d81a5a"/><ellipse transform="translate(618 343) rotate(128)" cx="16.0" cy="0" rx="15.0" ry="2.700" fill="#d81a5a"/><ellipse transform="translate(618 343) rotate(140)" cx="17.0" cy="0" rx="16.0" ry="2.700" fill="#d81a5a"/><ellipse transform="translate(618 343) rotate(152)" cx="15.0" cy="0" rx="14.0" ry="2.700" fill="#d81a5a"/><ellipse transform="translate(618 343) rotate(168)" cx="11.0" cy="0" rx="10.0" ry="2.700" fill="#d81a5a"/><ellipse transform="translate(618 343) rotate(190)" cx="7.0" cy="0" rx="6.0" ry="2.700" fill="#d81a5a"/><ellipse transform="translate(618 343) rotate(215)" cx="6.5" cy="0" rx="5.5" ry="2.700" fill="#d81a5a"/><ellipse transform="translate(618 343) rotate(245)" cx="7.0" cy="0" rx="6.0" ry="2.700" fill="#d81a5a"/><ellipse transform="translate(618 343) rotate(270)" cx="8.0" cy="0" rx="7.0" ry="2.700" fill="#d81a5a"/><ellipse transform="translate(618 343) rotate(295)" cx="9.5" cy="0" rx="8.5" ry="2.700" fill="#d81a5a"/><ellipse transform="translate(618 343) rotate(312)" cx="12.0" cy="0" rx="11.0" ry="2.700" fill="#d81a5a"/><circle cx="618" cy="343" r="6" fill="#d81a5a"/><ellipse cx="618" cy="342.500" rx="4.200" ry="2.800" transform="rotate(-20 618 342.500)" fill="#f5921e"/><path d="M627.500 357c4 10 7 22 8 35" stroke="#f5821e" stroke-width="1.200" fill="none"/><path transform="translate(638.3 355.0) rotate(30.0)" d="M0 -8.0C4.9 -4.0 4.2 5.3 0 8.0C-4.2 5.3 -4.9 -4.0 0 -8.0Z" fill="#f5921e"/><path transform="translate(625.0 359.0) rotate(-20.0)" d="M0 -4.0C2.8 -2.0 2.4 2.7 0 4.0C-2.4 2.7 -2.8 -2.0 0 -4.0Z" fill="#f0602a"/><path transform="translate(641.0 364.0) rotate(60.0)" d="M0 -5.0C3.5 -2.5 3.0 3.3 0 5.0C-3.0 3.3 -3.5 -2.5 0 -5.0Z" fill="#f0602a"/><path transform="translate(626.0 373.0) rotate(-55.0)" d="M0 -7.5C4.5 -3.8 3.9 5.0 0 7.5C-3.9 5.0 -4.5 -3.8 0 -7.5Z" fill="#f0602a"/><path d="M688.600 392C692 380 692 370 690.600 365C688 358 685 354 682.500 351C678 346 675 342 673.500 336.700C671 330 669 324 667.400 318.500M682.500 351C675 348 667 348 660 349.500M673.500 336.700C676 330 679 326 681.500 321.500M689.500 362C693 356 697 353 700.700 351" stroke="#a8184a" stroke-width=".900" fill="none"/><path transform="translate(665.4 314.0) rotate(-40.0)" d="M0 -5.0C3.8 -2.5 3.3 3.3 0 5.0C-3.3 3.3 -3.8 -2.5 0 -5.0Z" fill="#3ef5e6"/><path transform="translate(660.3 319.0) rotate(-80.0)" d="M0 -5.0C3.8 -2.5 3.3 3.3 0 5.0C-3.3 3.3 -3.8 -2.5 0 -5.0Z" fill="#3ef5e6"/><path transform="translate(676.0 317.0) rotate(35.0)" d="M0 -5.0C3.8 -2.5 3.3 3.3 0 5.0C-3.3 3.3 -3.8 -2.5 0 -5.0Z" fill="#3ef5e6"/><path transform="translate(686.2 317.5) rotate(60.0)" d="M0 -5.0C3.8 -2.5 3.3 3.3 0 5.0C-3.3 3.3 -3.8 -2.5 0 -5.0Z" fill="#3ef5e6"/><path transform="translate(687.2 322.6) rotate(80.0)" d="M0 -5.0C3.8 -2.5 3.3 3.3 0 5.0C-3.3 3.3 -3.8 -2.5 0 -5.0Z" fill="#3ef5e6"/><path transform="translate(662.3 327.0) rotate(-60.0)" d="M0 -5.0C3.8 -2.5 3.3 3.3 0 5.0C-3.3 3.3 -3.8 -2.5 0 -5.0Z" fill="#3ef5e6"/><path transform="translate(684.2 337.0) rotate(30.0)" d="M0 -5.0C3.8 -2.5 3.3 3.3 0 5.0C-3.3 3.3 -3.8 -2.5 0 -5.0Z" fill="#3ef5e6"/><path transform="translate(659.0 349.5) rotate(-80.0)" d="M0 -5.0C3.8 -2.5 3.3 3.3 0 5.0C-3.3 3.3 -3.8 -2.5 0 -5.0Z" fill="#3ef5e6"/><path transform="translate(693.0 347.4) rotate(-10.0)" d="M0 -5.0C3.8 -2.5 3.3 3.3 0 5.0C-3.3 3.3 -3.8 -2.5 0 -5.0Z" fill="#3ef5e6"/><path transform="translate(703.4 344.8) rotate(50.0)" d="M0 -5.0C3.8 -2.5 3.3 3.3 0 5.0C-3.3 3.3 -3.8 -2.5 0 -5.0Z" fill="#3ef5e6"/><path transform="translate(678.5 360.0) rotate(-70.0)" d="M0 -5.0C3.8 -2.5 3.3 3.3 0 5.0C-3.3 3.3 -3.8 -2.5 0 -5.0Z" fill="#3ef5e6"/><path transform="translate(705.8 360.0) rotate(-10.0)" d="M0 -5.0C3.8 -2.5 3.3 3.3 0 5.0C-3.3 3.3 -3.8 -2.5 0 -5.0Z" fill="#3ef5e6"/><path transform="translate(680.0 374.0) rotate(10.0)" d="M0 -5.0C3.8 -2.5 3.3 3.3 0 5.0C-3.3 3.3 -3.8 -2.5 0 -5.0Z" fill="#3ef5e6"/><path d="M720 290.200C723 297 720 301 721 306C722 312 718 315 718.500 320C719 326 714 329 714 334C713 340 708 342 706 347C702 353 696 354 689 355C684 349 685 343 687 338C685 333 688 329 689 325C689 320 693 317 694.500 313C696 305 709 296 720 290.200Z" fill="#5be81e"/><path d="M720 290.200C723 297 720 301 721 306C722 312 718 315 718.500 320C719 326 714 329 714 334C713 340 708 342 706 347C702 353 696 354 689 355C701 334 712 312 720 290.200Z" fill="#46b81e"/><path d="M748.500 284.300C745 292 742 298 740 303C736 313 732 324 728.500 333" stroke="#064a3a" stroke-width="1.200" fill="none"/><path transform="translate(733.5 291.4) rotate(-35.0)" d="M0 -13.0C3.8 -6.5 3.3 8.7 0 13.0C-3.3 8.7 -3.8 -6.5 0 -13.0Z" fill="#064a3a"/><path transform="translate(751.2 296.6) rotate(62.0)" d="M0 -11.5C3.8 -5.8 3.3 7.7 0 11.5C-3.3 7.7 -3.8 -5.8 0 -11.5Z" fill="#064a3a"/><path transform="translate(730.8 298.9) rotate(-39.0)" d="M0 -12.0C3.8 -6.0 3.3 8.0 0 12.0C-3.3 8.0 -3.8 -6.0 0 -12.0Z" fill="#064a3a"/><path transform="translate(748.4 304.2) rotate(68.0)" d="M0 -10.8C3.8 -5.4 3.3 7.2 0 10.8C-3.3 7.2 -3.8 -5.4 0 -10.8Z" fill="#064a3a"/><path transform="translate(728.3 306.4) rotate(-43.0)" d="M0 -11.0C3.8 -5.5 3.3 7.3 0 11.0C-3.3 7.3 -3.8 -5.5 0 -11.0Z" fill="#064a3a"/><path transform="translate(745.4 311.6) rotate(74.0)" d="M0 -10.0C3.8 -5.0 3.3 6.7 0 10.0C-3.3 6.7 -3.8 -5.0 0 -10.0Z" fill="#064a3a"/><path transform="translate(725.9 313.8) rotate(-47.0)" d="M0 -10.0C3.8 -5.0 3.3 6.7 0 10.0C-3.3 6.7 -3.8 -5.0 0 -10.0Z" fill="#064a3a"/><path transform="translate(742.3 319.0) rotate(80.0)" d="M0 -9.2C3.8 -4.6 3.3 6.2 0 9.2C-3.3 6.2 -3.8 -4.6 0 -9.2Z" fill="#064a3a"/><path transform="translate(723.6 321.1) rotate(-51.0)" d="M0 -9.0C3.8 -4.5 3.3 6.0 0 9.0C-3.3 6.0 -3.8 -4.5 0 -9.0Z" fill="#064a3a"/><path transform="translate(739.1 326.2) rotate(86.0)" d="M0 -8.5C3.8 -4.2 3.3 5.7 0 8.5C-3.3 5.7 -3.8 -4.2 0 -8.5Z" fill="#064a3a"/><path transform="translate(721.4 328.4) rotate(-55.0)" d="M0 -8.0C3.8 -4.0 3.3 5.3 0 8.0C-3.3 5.3 -3.8 -4.0 0 -8.0Z" fill="#064a3a"/><path transform="translate(735.7 333.3) rotate(92.0)" d="M0 -7.8C3.8 -3.9 3.3 5.2 0 7.8C-3.3 5.2 -3.8 -3.9 0 -7.8Z" fill="#064a3a"/><path transform="translate(745.0 292.5) rotate(22.0)" d="M0 -9.0C3.8 -4.5 3.3 6.0 0 9.0C-3.3 6.0 -3.8 -4.5 0 -9.0Z" fill="#064a3a"/><path d="M727 392V345M727 375l-9-14M727 382l16-14" stroke="#1a7ac8" stroke-width=".900" fill="none"/><path transform="translate(727.0 338.5) rotate(0.0)" d="M0 -10.5C9.8 -5.2 8.4 7.0 0 10.5C-8.4 7.0 -9.8 -5.2 0 -10.5Z" fill="#3ef5e6"/><path transform="translate(718.3 354.0) rotate(-50.0)" d="M0 -8.0C9.1 -4.0 7.8 5.3 0 8.0C-7.8 5.3 -9.1 -4.0 0 -8.0Z" fill="#3ef5e6"/><path transform="translate(745.5 366.5) rotate(50.0)" d="M0 -8.5C9.1 -4.2 7.8 5.7 0 8.5C-7.8 5.7 -9.1 -4.2 0 -8.5Z" fill="#2ab88a"/><path transform="translate(713.5 380.0) rotate(-40.0)" d="M0 -8.0C9.1 -4.0 7.8 5.3 0 8.0C-7.8 5.3 -9.1 -4.0 0 -8.0Z" fill="#2ab88a"/><path transform="translate(707.0 388.0) rotate(-70.0)" d="M0 -5.0C5.6 -2.5 4.8 3.3 0 5.0C-4.8 3.3 -5.6 -2.5 0 -5.0Z" fill="#3ef5e6"/><path d="M752 336l-3 56" stroke="#064a3a" stroke-width="1" fill="none"/><ellipse transform="translate(753.900 329.700) rotate(0)" cx="0" cy="-5.800" rx="2.500" ry="4.200" fill="#7ac8e0"/><ellipse transform="translate(753.900 329.700) rotate(45)" cx="0" cy="-5.800" rx="2.500" ry="4.200" fill="#7ac8e0"/><ellipse transform="translate(753.900 329.700) rotate(90)" cx="0" cy="-5.800" rx="2.500" ry="4.200" fill="#7ac8e0"/><ellipse transform="translate(753.900 329.700) rotate(135)" cx="0" cy="-5.800" rx="2.500" ry="4.200" fill="#7ac8e0"/><ellipse transform="translate(753.900 329.700) rotate(180)" cx="0" cy="-5.800" rx="2.500" ry="4.200" fill="#7ac8e0"/><ellipse transform="translate(753.900 329.700) rotate(225)" cx="0" cy="-5.800" rx="2.500" ry="4.200" fill="#7ac8e0"/><ellipse transform="translate(753.900 329.700) rotate(270)" cx="0" cy="-5.800" rx="2.500" ry="4.200" fill="#7ac8e0"/><ellipse transform="translate(753.900 329.700) rotate(315)" cx="0" cy="-5.800" rx="2.500" ry="4.200" fill="#7ac8e0"/><circle cx="753.900" cy="329.700" r="2.200" fill="#e8387a"/><path d="M747.700 338.500C753 339 758 338 761 335C764 338 765 342 765.500 346C759 346.500 752 343.500 747.700 338.500Z" fill="#f5821e"/><path d="M758 331.500C763 334 766 339 766.500 346C761 345 757 339 758 331.500Z" fill="#f26a2a"/><path d="M775.700 326C777.500 333 775 341.500 767 346.500C763 341 768 331 775.700 326Z" fill="#f04a5a"/><path d="M775.700 326C771 330 766 337 765.500 346C762 340 767 331 775.700 326Z" fill="#f5621e"/><circle cx="765.500" cy="348.200" r="2.600" fill="#5be81e"/><path d="M792 340C800 348 805 360 806 372L795 392H780Z" fill="#064a3a"/><path transform="translate(790.700 368.800) rotate(10.0)" d="M0 0C-3 -8 -6.500 -14 -6 -19C-5 -23.500 -2 -23 0 -20.500C2 -23 5 -23.500 6 -19C6.500 -14 3 -8 0 0Z" fill="#12a8a0"/><path transform="translate(790.700 368.800) rotate(42.7)" d="M0 0C-3 -8 -6.500 -14 -6 -19C-5 -23.500 -2 -23 0 -20.500C2 -23 5 -23.500 6 -19C6.500 -14 3 -8 0 0Z" fill="#12a8a0"/><path transform="translate(790.700 368.800) rotate(75.5)" d="M0 0C-3 -8 -6.500 -14 -6 -19C-5 -23.500 -2 -23 0 -20.500C2 -23 5 -23.500 6 -19C6.500 -14 3 -8 0 0Z" fill="#12a8a0"/><path transform="translate(790.700 368.800) rotate(108.2)" d="M0 0C-3 -8 -6.500 -14 -6 -19C-5 -23.500 -2 -23 0 -20.500C2 -23 5 -23.500 6 -19C6.500 -14 3 -8 0 0Z" fill="#12a8a0"/><path transform="translate(790.700 368.800) rotate(140.9)" d="M0 0C-3 -8 -6.500 -14 -6 -19C-5 -23.500 -2 -23 0 -20.500C2 -23 5 -23.500 6 -19C6.500 -14 3 -8 0 0Z" fill="#12a8a0"/><path transform="translate(790.700 368.800) rotate(173.6)" d="M0 0C-3 -8 -6.500 -14 -6 -19C-5 -23.500 -2 -23 0 -20.500C2 -23 5 -23.500 6 -19C6.500 -14 3 -8 0 0Z" fill="#12a8a0"/><path transform="translate(790.700 368.800) rotate(206.4)" d="M0 0C-3 -8 -6.500 -14 -6 -19C-5 -23.500 -2 -23 0 -20.500C2 -23 5 -23.500 6 -19C6.500 -14 3 -8 0 0Z" fill="#12a8a0"/><path transform="translate(790.700 368.800) rotate(239.1)" d="M0 0C-3 -8 -6.500 -14 -6 -19C-5 -23.500 -2 -23 0 -20.500C2 -23 5 -23.500 6 -19C6.500 -14 3 -8 0 0Z" fill="#12a8a0"/><path transform="translate(790.700 368.800) rotate(271.8)" d="M0 0C-3 -8 -6.500 -14 -6 -19C-5 -23.500 -2 -23 0 -20.500C2 -23 5 -23.500 6 -19C6.500 -14 3 -8 0 0Z" fill="#12a8a0"/><path transform="translate(790.700 368.800) rotate(304.5)" d="M0 0C-3 -8 -6.500 -14 -6 -19C-5 -23.500 -2 -23 0 -20.500C2 -23 5 -23.500 6 -19C6.500 -14 3 -8 0 0Z" fill="#12a8a0"/><path transform="translate(790.700 368.800) rotate(337.3)" d="M0 0C-3 -8 -6.500 -14 -6 -19C-5 -23.500 -2 -23 0 -20.500C2 -23 5 -23.500 6 -19C6.500 -14 3 -8 0 0Z" fill="#12a8a0"/><path transform="translate(790.700 368.800) rotate(0)" d="M0 -5V-10" stroke="#7adcd0" stroke-width=".600"/><path transform="translate(790.700 368.800) rotate(30)" d="M0 -5V-10" stroke="#7adcd0" stroke-width=".600"/><path transform="translate(790.700 368.800) rotate(60)" d="M0 -5V-10" stroke="#7adcd0" stroke-width=".600"/><path transform="translate(790.700 368.800) rotate(90)" d="M0 -5V-10" stroke="#7adcd0" stroke-width=".600"/><path transform="translate(790.700 368.800) rotate(120)" d="M0 -5V-10" stroke="#7adcd0" stroke-width=".600"/><path transform="translate(790.700 368.800) rotate(150)" d="M0 -5V-10" stroke="#7adcd0" stroke-width=".600"/><path transform="translate(790.700 368.800) rotate(180)" d="M0 -5V-10" stroke="#7adcd0" stroke-width=".600"/><path transform="translate(790.700 368.800) rotate(210)" d="M0 -5V-10" stroke="#7adcd0" stroke-width=".600"/><path transform="translate(790.700 368.800) rotate(240)" d="M0 -5V-10" stroke="#7adcd0" stroke-width=".600"/><path transform="translate(790.700 368.800) rotate(270)" d="M0 -5V-10" stroke="#7adcd0" stroke-width=".600"/><path transform="translate(790.700 368.800) rotate(300)" d="M0 -5V-10" stroke="#7adcd0" stroke-width=".600"/><path transform="translate(790.700 368.800) rotate(330)" d="M0 -5V-10" stroke="#7adcd0" stroke-width=".600"/><circle cx="790.700" cy="368.800" r="4" fill="#c8f0d8"/><path d="M815 392c2-12 8-18 18-22 8-3 16-4 22-8M826 373c2-6 0-10 -1-15M836 369c6 2 10 6 12 12M848 364c-2-6-2-10 0-14" stroke="#b8184a" stroke-width=".900" fill="none"/><path d="M856 345c-6 14-12 30-16 47" stroke="#064a3a" stroke-width="1" fill="none"/><path transform="translate(824.6 351.6) rotate(-10.0)" d="M0 -4.5C3.1 -2.2 2.7 3.0 0 4.5C-2.7 3.0 -3.1 -2.2 0 -4.5Z" fill="#3ef5e6"/><path transform="translate(831.3 359.0) rotate(30.0)" d="M0 -4.5C3.1 -2.2 2.7 3.0 0 4.5C-2.7 3.0 -3.1 -2.2 0 -4.5Z" fill="#3ef5e6"/><path transform="translate(844.7 355.5) rotate(10.0)" d="M0 -4.5C3.1 -2.2 2.7 3.0 0 4.5C-2.7 3.0 -3.1 -2.2 0 -4.5Z" fill="#3ef5e6"/><path transform="translate(815.0 361.0) rotate(60.0)" d="M0 -4.5C3.1 -2.2 2.7 3.0 0 4.5C-2.7 3.0 -3.1 -2.2 0 -4.5Z" fill="#3ef5e6"/><path transform="translate(837.0 378.0) rotate(-60.0)" d="M0 -4.5C3.1 -2.2 2.7 3.0 0 4.5C-2.7 3.0 -3.1 -2.2 0 -4.5Z" fill="#3ef5e6"/><path transform="translate(828.0 388.0) rotate(70.0)" d="M0 -4.5C3.1 -2.2 2.7 3.0 0 4.5C-2.7 3.0 -3.1 -2.2 0 -4.5Z" fill="#3ef5e6"/><path transform="translate(851.0 350.0) rotate(-30.0)" d="M0 -4.5C3.1 -2.2 2.7 3.0 0 4.5C-2.7 3.0 -3.1 -2.2 0 -4.5Z" fill="#3ef5e6"/><ellipse transform="translate(853 334) rotate(0)" cx="0" cy="-5" rx="2.200" ry="3.600" fill="#7ac8e0"/><ellipse transform="translate(853 334) rotate(45)" cx="0" cy="-5" rx="2.200" ry="3.600" fill="#7ac8e0"/><ellipse transform="translate(853 334) rotate(90)" cx="0" cy="-5" rx="2.200" ry="3.600" fill="#7ac8e0"/><ellipse transform="translate(853 334) rotate(135)" cx="0" cy="-5" rx="2.200" ry="3.600" fill="#7ac8e0"/><ellipse transform="translate(853 334) rotate(180)" cx="0" cy="-5" rx="2.200" ry="3.600" fill="#7ac8e0"/><ellipse transform="translate(853 334) rotate(225)" cx="0" cy="-5" rx="2.200" ry="3.600" fill="#7ac8e0"/><ellipse transform="translate(853 334) rotate(270)" cx="0" cy="-5" rx="2.200" ry="3.600" fill="#7ac8e0"/><ellipse transform="translate(853 334) rotate(315)" cx="0" cy="-5" rx="2.200" ry="3.600" fill="#7ac8e0"/>
</g></svg>
<svg style="left:0;top:0" width="1024" height="618" viewBox="0 0 1024 618"><rect x="514.700" y="65.800" width="339.700" height="8.800" fill="#000"/><rect x="514.700" y="65.800" width="8" height="353.500" fill="#000"/><path d="M523.07 72.800V74.600M525.73 71.800V74.600M528.38 72.800V74.600M531.03 72.800V74.600M533.69 72.800V74.600M536.35 72.800V74.600M539.00 66.200V74.600M541.65 72.800V74.600M544.31 72.800V74.600M546.97 72.800V74.600M549.62 72.800V74.600M552.27 71.800V74.600M554.93 72.800V74.600M557.59 72.800V74.600M560.24 72.800V74.600M562.89 72.800V74.600M565.55 66.200V74.600M568.21 72.800V74.600M570.86 72.800V74.600M573.51 72.800V74.600M576.17 72.800V74.600M578.83 71.800V74.600M581.48 72.800V74.600M584.13 72.800V74.600M586.79 72.800V74.600M589.44 72.800V74.600M592.10 66.200V74.600M594.75 72.800V74.600M597.41 72.800V74.600M600.07 72.800V74.600M602.72 72.800V74.600M605.38 71.800V74.600M608.03 72.800V74.600M610.68 72.800V74.600M613.34 72.800V74.600M616.00 72.800V74.600M618.65 66.200V74.600M621.30 72.800V74.600M623.96 72.800V74.600M626.62 72.800V74.600M629.27 72.800V74.600M631.92 71.800V74.600M634.58 72.800V74.600M637.24 72.800V74.600M639.89 72.800V74.600M642.54 72.800V74.600M645.20 66.200V74.600M647.86 72.800V74.600M650.51 72.800V74.600M653.16 72.800V74.600M655.82 72.800V74.600M658.48 71.800V74.600M661.13 72.800V74.600M663.78 72.800V74.600M666.44 72.800V74.600M669.10 72.800V74.600M671.75 66.200V74.600M674.40 72.800V74.600M677.06 72.800V74.600M679.72 72.800V74.600M682.37 72.800V74.600M685.02 71.800V74.600M687.68 72.800V74.600M690.34 72.800V74.600M692.99 72.800V74.600M695.64 72.800V74.600M698.30 66.200V74.600M700.95 72.800V74.600M703.61 72.800V74.600M706.26 72.800V74.600M708.92 72.800V74.600M711.58 71.800V74.600M714.23 72.800V74.600M716.88 72.800V74.600M719.54 72.800V74.600M722.19 72.800V74.600M724.85 66.200V74.600M727.50 72.800V74.600M730.16 72.800V74.600M732.82 72.800V74.600M735.47 72.800V74.600M738.12 71.800V74.600M740.78 72.800V74.600M743.43 72.800V74.600M746.09 72.800V74.600M748.75 72.800V74.600M751.40 66.200V74.600M754.05 72.800V74.600M756.71 72.800V74.600M759.37 72.800V74.600M762.02 72.800V74.600M764.67 71.800V74.600M767.33 72.800V74.600M769.99 72.800V74.600M772.64 72.800V74.600M775.29 72.800V74.600M777.95 66.200V74.600M780.61 72.800V74.600M783.26 72.800V74.600M785.91 72.800V74.600M788.57 72.800V74.600M791.23 71.800V74.600M793.88 72.800V74.600M796.53 72.800V74.600M799.19 72.800V74.600M801.85 72.800V74.600M804.50 66.200V74.600M807.15 72.800V74.600M809.81 72.800V74.600M812.46 72.800V74.600M815.12 72.800V74.600M817.77 71.800V74.600M820.43 72.800V74.600M823.09 72.800V74.600M825.74 72.800V74.600M828.39 72.800V74.600M831.05 66.200V74.600M833.70 72.800V74.600M836.36 72.800V74.600M839.01 72.800V74.600M841.67 72.800V74.600M844.33 71.800V74.600M846.98 72.800V74.600M849.63 72.800V74.600M852.29 72.800V74.600" stroke="#b8b8b8" stroke-width=".500"/><path d="M515 75.35H522.700M520.800 78.01H522.700M520.800 80.66H522.700M520.800 83.32H522.700M520.800 85.97H522.700M519.800 88.62H522.700M520.800 91.28H522.700M520.800 93.94H522.700M520.800 96.59H522.700M520.800 99.25H522.700M515 101.90H522.700M520.800 104.56H522.700M520.800 107.21H522.700M520.800 109.87H522.700M520.800 112.52H522.700M519.800 115.18H522.700M520.800 117.83H522.700M520.800 120.48H522.700M520.800 123.14H522.700M520.800 125.80H522.700M515 128.45H522.700M520.800 131.11H522.700M520.800 133.76H522.700M520.800 136.42H522.700M520.800 139.07H522.700M519.800 141.72H522.700M520.800 144.38H522.700M520.800 147.03H522.700M520.800 149.69H522.700M520.800 152.34H522.700M515 155.00H522.700M520.800 157.66H522.700M520.800 160.31H522.700M520.800 162.97H522.700M520.800 165.62H522.700M519.800 168.28H522.700M520.800 170.93H522.700M520.800 173.58H522.700M520.800 176.24H522.700M520.800 178.89H522.700M515 181.55H522.700M520.800 184.20H522.700M520.800 186.86H522.700M520.800 189.51H522.700M520.800 192.17H522.700M519.800 194.82H522.700M520.800 197.48H522.700M520.800 200.13H522.700M520.800 202.79H522.700M520.800 205.44H522.700M515 208.10H522.700M520.800 210.75H522.700M520.800 213.41H522.700M520.800 216.06H522.700M520.800 218.72H522.700M519.800 221.38H522.700M520.800 224.03H522.700M520.800 226.69H522.700M520.800 229.34H522.700M520.800 232.00H522.700M515 234.65H522.700M520.800 237.31H522.700M520.800 239.96H522.700M520.800 242.62H522.700M520.800 245.27H522.700M519.800 247.92H522.700M520.800 250.58H522.700M520.800 253.23H522.700M520.800 255.89H522.700M520.800 258.54H522.700M515 261.20H522.700M520.800 263.86H522.700M520.800 266.51H522.700M520.800 269.16H522.700M520.800 271.82H522.700M519.800 274.48H522.700M520.800 277.13H522.700M520.800 279.78H522.700M520.800 282.44H522.700M520.800 285.10H522.700M515 287.75H522.700M520.800 290.40H522.700M520.800 293.06H522.700M520.800 295.72H522.700M520.800 298.37H522.700M519.800 301.02H522.700M520.800 303.68H522.700M520.800 306.33H522.700M520.800 308.99H522.700M520.800 311.64H522.700M515 314.30H522.700M520.800 316.95H522.700M520.800 319.61H522.700M520.800 322.26H522.700M520.800 324.92H522.700M519.800 327.57H522.700M520.800 330.23H522.700M520.800 332.88H522.700M520.800 335.54H522.700M520.800 338.19H522.700M515 340.85H522.700M520.800 343.50H522.700M520.800 346.16H522.700M520.800 348.81H522.700M520.800 351.47H522.700M519.800 354.12H522.700M520.800 356.78H522.700M520.800 359.43H522.700M520.800 362.09H522.700M520.800 364.75H522.700M515 367.40H522.700M520.800 370.05H522.700M520.800 372.71H522.700M520.800 375.37H522.700M520.800 378.02H522.700M519.800 380.67H522.700M520.800 383.33H522.700M520.800 385.99H522.700M520.800 388.64H522.700M520.800 391.29H522.700M515 393.95H522.700M520.800 396.61H522.700M520.800 399.26H522.700M520.800 401.91H522.700M520.800 404.57H522.700M519.800 407.23H522.700M520.800 409.88H522.700M520.800 412.53H522.700M520.800 415.19H522.700M520.800 417.85H522.700" stroke="#b8b8b8" stroke-width=".500"/><path d="M515 70.800H522.500M519.500 66.200V74.400" stroke="#bbb" stroke-width=".600"/><text x="540.2" y="71" font-size="5.200" fill="#a8a8a8" font-family="Liberation Sans" letter-spacing="-.2">400</text><text x="566.8" y="71" font-size="5.200" fill="#a8a8a8" font-family="Liberation Sans" letter-spacing="-.2">500</text><text x="593.3" y="71" font-size="5.200" fill="#a8a8a8" font-family="Liberation Sans" letter-spacing="-.2">600</text><text x="619.9" y="71" font-size="5.200" fill="#a8a8a8" font-family="Liberation Sans" letter-spacing="-.2">700</text><text x="646.4" y="71" font-size="5.200" fill="#a8a8a8" font-family="Liberation Sans" letter-spacing="-.2">800</text><text x="673.0" y="71" font-size="5.200" fill="#a8a8a8" font-family="Liberation Sans" letter-spacing="-.2">900</text><text x="699.5" y="71" font-size="5.200" fill="#a8a8a8" font-family="Liberation Sans" letter-spacing="-.2">1000</text><text x="726.1" y="71" font-size="5.200" fill="#a8a8a8" font-family="Liberation Sans" letter-spacing="-.2">1100</text><text x="752.6" y="71" font-size="5.200" fill="#a8a8a8" font-family="Liberation Sans" letter-spacing="-.2">1200</text><text x="779.2" y="71" font-size="5.200" fill="#a8a8a8" font-family="Liberation Sans" letter-spacing="-.2">1300</text><text x="805.7" y="71" font-size="5.200" fill="#a8a8a8" font-family="Liberation Sans" letter-spacing="-.2">1400</text><text x="832.2" y="71" font-size="5.200" fill="#a8a8a8" font-family="Liberation Sans" letter-spacing="-.2">1500</text><text transform="translate(516.300 103.4) rotate(90)" font-size="5.200" fill="#a8a8a8" font-family="Liberation Sans" letter-spacing="-.3">0</text><text transform="translate(516.300 130.0) rotate(90)" font-size="5.200" fill="#a8a8a8" font-family="Liberation Sans" letter-spacing="-.3">100</text><text transform="translate(516.300 156.5) rotate(90)" font-size="5.200" fill="#a8a8a8" font-family="Liberation Sans" letter-spacing="-.3">200</text><text transform="translate(516.300 183.1) rotate(90)" font-size="5.200" fill="#a8a8a8" font-family="Liberation Sans" letter-spacing="-.3">300</text><text transform="translate(516.300 209.6) rotate(90)" font-size="5.200" fill="#a8a8a8" font-family="Liberation Sans" letter-spacing="-.3">400</text><text transform="translate(516.300 236.2) rotate(90)" font-size="5.200" fill="#a8a8a8" font-family="Liberation Sans" letter-spacing="-.3">500</text><text transform="translate(516.300 262.7) rotate(90)" font-size="5.200" fill="#a8a8a8" font-family="Liberation Sans" letter-spacing="-.3">600</text><text transform="translate(516.300 289.2) rotate(90)" font-size="5.200" fill="#a8a8a8" font-family="Liberation Sans" letter-spacing="-.3">700</text><text transform="translate(516.300 315.8) rotate(90)" font-size="5.200" fill="#a8a8a8" font-family="Liberation Sans" letter-spacing="-.3">800</text><text transform="translate(516.300 342.4) rotate(90)" font-size="5.200" fill="#a8a8a8" font-family="Liberation Sans" letter-spacing="-.3">900</text><text transform="translate(516.300 368.9) rotate(90)" font-size="5.200" fill="#a8a8a8" font-family="Liberation Sans" letter-spacing="-.3">1000</text><text transform="translate(516.300 395.5) rotate(90)" font-size="5.200" fill="#a8a8a8" font-family="Liberation Sans" letter-spacing="-.3">1100</text><text transform="translate(516.300 76.800) rotate(90)" font-size="5.200" fill="#a8a8a8" font-family="Liberation Sans" letter-spacing="-.3">-100</text><path d="M522.700 82.4H854.600" stroke="#b44a9e" stroke-width=".900"/><path d="M522.700 100.7H854.600" stroke="#b44a9e" stroke-width=".900"/><path d="M522.700 411.6H854.600" stroke="#b44a9e" stroke-width=".900"/><path d="M522.700 74.600h6.300l-6.300 6z" fill="#2d8ceb"/><path d="M854.600 74.600h-5.500l5.500 6z" fill="#2d8ceb"/><path d="M522.700 419.300h6.300l-6.300-6z" fill="#2d8ceb"/><path d="M854.600 419.300h-6.300l6.300-6z" fill="#2d8ceb"/></svg>
<div class="t" style="left:528.00px;top:80.50px;color:#f0f0f0;font-size:6.70px;letter-spacing:-0.437px;text-shadow:0 0 .8px #000;">Aktive Kamera (Kamera 1)</div>
<div class="a" style="left:173.200px;top:420.500px;width:681.800px;height:14px;background:#222;border-top:.7px solid #181818;"></div>
<div class="a" style="left:176.5px;top:423px;width:36.0px;height:8.800px;background:#1d1d1d;border:.5px solid #343434;border-radius:1px;box-sizing:border-box;"></div><svg style="left:205.0px;top:426px" width="5" height="4" viewBox="0 0 5 4"><path d="M.5 .6l2 2 2-2" stroke="#b0b0b0" stroke-width=".700" fill="none"/></svg><div class="t" style="left:179.50px;top:424.10px;color:#b4b4b4;font-size:6.40px;letter-spacing:-0.432px;">50%</div>
<div class="a" style="left:219.5px;top:423px;width:45.0px;height:8.800px;background:#1d1d1d;border:.5px solid #343434;border-radius:1px;box-sizing:border-box;"></div><svg style="left:257.0px;top:426px" width="5" height="4" viewBox="0 0 5 4"><path d="M.5 .6l2 2 2-2" stroke="#b0b0b0" stroke-width=".700" fill="none"/></svg><div class="t" style="left:222.80px;top:424.10px;color:#b4b4b4;font-size:6.40px;letter-spacing:0.097px;">Voll</div>
<svg style="left:0;top:419px" width="1024" height="16" viewBox="0 419 1024 16"><path d="M216.0 423V432" stroke="#363636" stroke-width=".600"/><path d="M267.5 423V432" stroke="#363636" stroke-width=".600"/><path d="M328.5 423V432" stroke="#363636" stroke-width=".600"/><path d="M376.5 423V432" stroke="#363636" stroke-width=".600"/><path d="M405.5 423V432" stroke="#363636" stroke-width=".600"/><path d="M449.5 423V432" stroke="#363636" stroke-width=".600"/><path d="M669.5 423V432" stroke="#363636" stroke-width=".600"/><path d="M697.0 423V432" stroke="#363636" stroke-width=".600"/><path d="M749.5 423V432" stroke="#363636" stroke-width=".600"/><path d="M812.5 423V432" stroke="#363636" stroke-width=".600"/><rect x="272.500" y="424.300" width="6.600" height="6" rx=".600" fill="none" stroke="#c8c8c8" stroke-width=".700"/><path d="M274.500 426l2.600 2.200-1.200 .2 .6 1.300-.6 .2-.6-1.300-.8 .7z" fill="#c8c8c8"/><rect x="283.500" y="423" width="9" height="8.800" fill="#111"/><rect x="284.800" y="424.400" width="6.400" height="5.800" fill="none" stroke="#2d8ceb" stroke-width=".700"/><path d="M284.800 424.400l6.400 5.800M291.200 424.400l-6.400 5.800" stroke="#2d8ceb" stroke-width=".500" stroke-dasharray="1 .6"/><path d="M296.500 425.500l5.800-1v5.800h-5.800z" fill="none" stroke="#2d8ceb" stroke-width=".700"/><rect x="301.500" y="423.700" width="1.500" height="1.500" fill="#2d8ceb"/><rect x="295.800" y="429.500" width="1.500" height="1.500" fill="#2d8ceb"/><rect x="307.800" y="424.300" width="6.800" height="6" rx=".600" fill="none" stroke="#c8c8c8" stroke-width=".700"/><rect x="309.500" y="425.800" width="3.400" height="3" fill="#c8c8c8"/><rect x="319.300" y="424" width="6.800" height="4.600" fill="none" stroke="#c8c8c8" stroke-width=".700"/><path d="M322.700 424v4.600M320.500 426.300h4.500" stroke="#c8c8c8" stroke-width=".500"/><path d="M321.500 431.500l1.200-1.500 1.200 1.500z" fill="#c8c8c8"/><circle cx="339.300" cy="426.300" r="1.800" fill="#e03030"/><circle cx="341.500" cy="426.300" r="1.800" fill="#30c030"/><circle cx="340.400" cy="428.300" r="1.800" fill="#3070e0"/><path d="M342.500 430.500l1 1.200 1-1.200z" fill="#c8c8c8"/><circle cx="352" cy="427.400" r="2.800" fill="none" stroke="#c8c8c8" stroke-width="1.100"/><path d="M352 424.600l1 2.800M354.800 427.400l-2.800 1M352 430.200l-1-2.800M349.200 427.400l2.800-1" stroke="#c8c8c8" stroke-width=".500"/><path d="M383.300 425.500h2l.6-1h2.400l.6 1h2v5h-7.600z" fill="#c8c8c8"/><circle cx="387.100" cy="427.900" r="1.500" fill="#232323"/><path d="M397 429.500l2.500-3.500 2 1.500-2.500 3.500zM399.500 427l2.500-3" stroke="#555" stroke-width=".700" fill="none"/><rect x="411" y="423" width="36.500" height="8.800" fill="#1d1d1d" stroke="#343434" stroke-width=".500"/><rect x="618" y="423" width="48" height="8.800" rx="1" fill="none" stroke="#363636" stroke-width=".600"/><circle cx="626" cy="427" r="2.200" fill="none" stroke="#484848" stroke-width=".700"/><path d="M628 429l1.500 1.500" stroke="#484848" stroke-width=".700"/><path d="M675 430l1-5h4l1 5M678 425v5" stroke="#484848" stroke-width=".700" fill="none"/><rect x="686.500" y="424.500" width="6.500" height="4.500" fill="none" stroke="#484848" stroke-width=".700"/><path d="M688.500 431h3" stroke="#484848" stroke-width=".700"/></svg>
<div class="t" style="left:359.00px;top:424.10px;color:#2d8ceb;font-size:6.40px;letter-spacing:-0.331px;">+0,0</div>
<div class="t" style="left:414.50px;top:424.10px;color:#9a9a9a;font-size:6.20px;letter-spacing:0.055px;">0:00:00:00</div>
<div class="t" style="left:633.00px;top:424.10px;color:#484848;font-size:6.40px;letter-spacing:-0.297px;">3D-Entwurf</div>
<div class="a" style="left:701.7px;top:423px;width:45.3px;height:8.800px;background:#1d1d1d;border:.5px solid #343434;border-radius:1px;box-sizing:border-box;"></div><svg style="left:739.5px;top:426px" width="5" height="4" viewBox="0 0 5 4"><path d="M.5 .6l2 2 2-2" stroke="#b0b0b0" stroke-width=".700" fill="none"/></svg><div class="t" style="left:705.80px;top:424.10px;color:#b4b4b4;font-size:6.40px;letter-spacing:-0.608px;">Klassisch ...</div>
<div class="a" style="left:753.5px;top:423px;width:55.5px;height:8.800px;background:#1d1d1d;border:.5px solid #343434;border-radius:1px;box-sizing:border-box;"></div><svg style="left:801.5px;top:426px" width="5" height="4" viewBox="0 0 5 4"><path d="M.5 .6l2 2 2-2" stroke="#b0b0b0" stroke-width=".700" fill="none"/></svg><div class="t" style="left:757.50px;top:424.10px;color:#b4b4b4;font-size:6.40px;letter-spacing:-0.232px;">Aktive Kamer...</div>
<div class="a" style="left:815.3px;top:423px;width:36.5px;height:8.800px;background:#1d1d1d;border:.5px solid #343434;border-radius:1px;box-sizing:border-box;"></div><svg style="left:844.3px;top:426px" width="5" height="4" viewBox="0 0 5 4"><path d="M.5 .6l2 2 2-2" stroke="#b0b0b0" stroke-width=".700" fill="none"/></svg><div class="t" style="left:819.50px;top:424.10px;color:#b4b4b4;font-size:6.40px;letter-spacing:-0.361px;">2 Ansi...</div>
<div class="p" style="left:856.900px;top:37px;width:167.100px;height:30.400px;"></div>
<div class="p" style="left:856.900px;top:68.900px;width:167.100px;height:549.100px;"></div>
<div class="t" style="left:864.00px;top:41.40px;color:#c8c8c8;font-size:6.50px;letter-spacing:-0.326px;">Vorschau</div>
<svg style="left:894px;top:43.700px" width="5" height="4" viewBox="0 0 5 4"><path d="M0 .4h4.600M0 2h4.600M0 3.600h4.600" stroke="#b0b0b0" stroke-width=".700"/></svg>
<svg style="left:857px;top:54px" width="167" height="12" viewBox="857 54 167 12"><path d="M882.500 57v5.400" stroke="#d0d0d0" stroke-width=".900"/><path d="M888.500 57v5.400l-4.800-2.700z" fill="#d0d0d0"/><path d="M899.500 57v5.400l-4.800-2.700z" fill="#d0d0d0"/><path d="M901.300 57v5.400" stroke="#d0d0d0" stroke-width=".900"/><path d="M908.300 56.800v5.800l5-2.900z" fill="#d0d0d0"/><path d="M920.700 57v5.400" stroke="#d0d0d0" stroke-width=".900"/><path d="M922.500 57v5.400l4.800-2.700z" fill="#d0d0d0"/><path d="M933.500 57v5.400l4.800-2.700z" fill="#d0d0d0"/><path d="M939.500 57v5.400" stroke="#d0d0d0" stroke-width=".900"/></svg>
<div class="t" style="left:864.00px;top:73.10px;color:#c8c8c8;font-size:6.50px;letter-spacing:-0.320px;">Eigenschaften: Keine Auswahl</div>
<svg style="left:1006.800px;top:75px" width="5" height="4" viewBox="0 0 5 4"><path d="M0 .4h4.600M0 2h4.600M0 3.600h4.600" stroke="#b0b0b0" stroke-width=".700"/></svg>
<div class="a" style="left:858.500px;top:96.3px;width:158px;height:.7px;background:#171717;"></div>
<div class="a" style="left:858.500px;top:112.2px;width:158px;height:.7px;background:#171717;"></div>
<div class="a" style="left:858.500px;top:128.3px;width:158px;height:.7px;background:#171717;"></div>
<div class="a" style="left:858.500px;top:144.3px;width:158px;height:.7px;background:#171717;"></div>
<div class="t" style="left:864.00px;top:101.70px;color:#9a9a9a;font-size:6.50px;letter-spacing:-0.272px;">Ausrichten</div>
<div class="t" style="left:864.00px;top:117.70px;color:#9a9a9a;font-size:6.50px;letter-spacing:-0.285px;">Audio</div>
<div class="t" style="left:864.00px;top:133.70px;color:#9a9a9a;font-size:6.50px;letter-spacing:-0.310px;">Effekte und Vorgaben</div>
<div class="a" style="left:0;top:435.200px;width:855.300px;height:182.800px;background:#29507c;"></div>
<div class="a" style="left:1.300px;top:437px;width:852.700px;height:180px;background:#222;"></div>
<div class="a" style="left:14px;top:440.500px;width:5px;height:5px;background:#b3a384;"></div>
<div class="t" style="left:26.00px;top:439.70px;color:#8a8a8a;font-size:6.50px;letter-spacing:-0.222px;">One Node with Null</div>
<svg style="left:99.500px;top:441.500px" width="4" height="4" viewBox="0 0 4 4"><path d="M.5 .5l2.600 2.600M3.100 .5l-2.600 2.600" stroke="#8a8a8a" stroke-width=".600"/></svg>
<div class="a" style="left:108px;top:440.500px;width:5px;height:5px;background:#b3a384;"></div>
<div class="t" style="left:119.50px;top:439.70px;color:#d8d8d8;font-size:6.50px;letter-spacing:-0.348px;">Two Node</div>
<svg style="left:152.800px;top:441.300px" width="5" height="4" viewBox="0 0 5 4"><path d="M0 .4h4.200M0 2h4.200M0 3.600h4.200" stroke="#b0b0b0" stroke-width=".700"/></svg>
<div class="a" style="left:100px;top:447.800px;width:57px;height:1px;background:#d0d0d0;"></div>
<div class="t" style="left:177.00px;top:439.70px;color:#8a8a8a;font-size:6.50px;letter-spacing:-0.263px;">Renderliste</div>
<div class="t" style="left:9.00px;top:453.00px;color:#2d8ceb;font-size:8.70px;letter-spacing:-0.272px;font-weight:700;">0:00:00:00</div>
<div class="t" style="left:6.00px;top:461.20px;color:#245c94;font-size:6.20px;letter-spacing:-0.266px;">00000 (24.00 fps)</div>
<div class="a" style="left:58px;top:455px;width:334px;height:9.300px;background:#141414;border-radius:1px;"></div>
<svg style="left:61px;top:456px" width="10" height="8" viewBox="0 0 10 8"><circle cx="4.300" cy="3" r="2" fill="none" stroke="#c8c8c8" stroke-width=".700"/><path d="M2.900 4.500L.8 6.800" stroke="#c8c8c8" stroke-width=".800"/><path d="M6.300 5l1.100 1.200 1.100-1.200z" fill="#c8c8c8"/></svg>
<svg style="left:395px;top:452px" width="90" height="16" viewBox="395 452 90 16"><path d="M401 457.300h4v5h3M405 459.800h3" stroke="#c8c8c8" stroke-width=".700" fill="none"/><rect x="400.300" y="456.300" width="2.600" height="2" fill="#c8c8c8"/><rect x="407" y="458.800" width="2.600" height="2" fill="#c8c8c8"/><rect x="407" y="461.300" width="2.600" height="2" fill="#c8c8c8"/><path d="M419.500 460l3.500-2.800 3.500 2.800zM420.500 460.500h5v2.500h-5z" fill="#c8c8c8"/><circle cx="423" cy="456.300" r="1" fill="#c8c8c8"/><rect x="432.500" y="458" width="5" height="5" fill="#c8c8c8"/><rect x="434.500" y="456.300" width="5" height="5" fill="#777" stroke="#c8c8c8" stroke-width=".500"/><ellipse cx="450.500" cy="459.800" rx="3.600" ry="2.300" transform="rotate(-35 450.500 459.800)" fill="none" stroke="#c8c8c8" stroke-width="1"/><ellipse cx="450.500" cy="459.800" rx="1.800" ry=".800" transform="rotate(-35 450.500 459.800)" fill="none" stroke="#c8c8c8" stroke-width=".500"/><rect x="464.800" y="456.200" width="7.400" height="7" rx=".800" fill="none" stroke="#c8c8c8" stroke-width=".800"/><path d="M466 457.500c2 .3 4.500 2 5 4.500" stroke="#c8c8c8" stroke-width=".600" fill="none"/></svg>
<div class="a" style="left:1px;top:470px;width:480.500px;height:9.800px;background:#262626;border-top:.5px solid #1a1a1a;border-bottom:.5px solid #1a1a1a;box-sizing:border-box;"></div>
<svg style="left:0;top:470px" width="482" height="10" viewBox="0 470 482 10"><path d="M3.600 475c1.500-2.200 4.500-2.200 6 0-1.500 2.200-4.500 2.200-6 0z" fill="#c8c8c8"/><circle cx="6.600" cy="475" r="1" fill="#262626"/><path d="M15 472.500a2.500 2.500 0 0 0 0 5z" fill="#c8c8c8"/><path d="M15 472.500a2.500 2.500 0 0 1 0 5z" fill="none" stroke="#c8c8c8" stroke-width=".600"/><path d="M11.800 473.500a3 3 0 0 0 0 3M18.200 473.500a3 3 0 0 1 0 3" stroke="#c8c8c8" stroke-width=".500" fill="none"/><circle cx="22.800" cy="475" r="1.500" fill="#c8c8c8"/><rect x="28.600" y="474.300" width="4.400" height="3.400" fill="#c8c8c8"/><path d="M29.500 474.300v-1a1.300 1.300 0 0 1 2.600 0v1" stroke="#c8c8c8" stroke-width=".700" fill="none"/><rect x="30.300" y="475.200" width="1" height="1.300" fill="#262626"/><path d="M44.600 472h3l3.400 3.400-2.900 2.900-3.500-3.300z" fill="#c8c8c8"/><circle cx="46" cy="473.400" r=".600" fill="#262626"/><path d="M261.500 474.800l1.700-2.500 1.700 2.500z" fill="#c8c8c8"/><path d="M259.900 475.400h6.600" stroke="#c8c8c8" stroke-width=".900"/><path d="M261.300 476v1.600M265.100 476v1.600M263.200 476v1.200" stroke="#c8c8c8" stroke-width=".900"/><circle cx="271" cy="475" r="1.300" fill="none" stroke="#c8c8c8" stroke-width=".700"/><path d="M271 472.400v1M271 476.600v1M268.400 475h1M272.600 475h1" stroke="#c8c8c8" stroke-width=".700"/><path d="M276.500 472.600l5 5" stroke="#c8c8c8" stroke-width=".800"/><rect x="293.300" y="472.600" width="5.200" height="5" rx=".600" fill="#c8c8c8"/><rect x="294.300" y="474" width="3.200" height="2" fill="#555"/><ellipse cx="303" cy="475" rx="2.600" ry="1.800" transform="rotate(-40 303 475)" fill="none" stroke="#c8c8c8" stroke-width=".900"/><circle cx="310.800" cy="475" r="2.500" fill="none" stroke="#c8c8c8" stroke-width=".600"/><path d="M310.800 472.500a2.500 2.500 0 0 1 0 5a3.500 3.500 0 0 0 0-5z" fill="#c8c8c8"/><path d="M316.800 474l2.400-1 2.400 1v2.400l-2.400 1-2.400-1zM316.800 474l2.400 1 2.400-1M319.200 475v2.400" stroke="#c8c8c8" stroke-width=".500" fill="none"/></svg>
<div class="t" style="left:285.00px;top:471.50px;color:#c8c8c8;font-size:6.50px;letter-spacing:0.369px;font-style:italic;font-family:'Liberation Serif';">fx</div>
<div class="t" style="left:57.00px;top:471.00px;color:#9a9a9a;font-size:5.80px;letter-spacing:-0.207px;">Nr.</div>
<div class="t" style="left:75.00px;top:471.00px;color:#9a9a9a;font-size:5.80px;letter-spacing:-0.620px;">Ebenenname</div>
<div class="t" style="left:381.50px;top:471.00px;color:#9a9a9a;font-size:5.80px;letter-spacing:-0.482px;">Übergeordnet und verkn...</div>
<div class="t" style="left:444.00px;top:471.00px;color:#9a9a9a;font-size:5.80px;letter-spacing:-0.604px;">Dehnung</div>
<div class="a" style="left:54.5px;top:471.500px;width:.6px;height:7px;background:#1a1a1a"></div>
<div class="a" style="left:72.0px;top:471.500px;width:.6px;height:7px;background:#1a1a1a"></div>
<div class="a" style="left:258.5px;top:471.500px;width:.6px;height:7px;background:#1a1a1a"></div>
<div class="a" style="left:379.0px;top:471.500px;width:.6px;height:7px;background:#1a1a1a"></div>
<div class="a" style="left:439.7px;top:471.500px;width:.6px;height:7px;background:#1a1a1a"></div>
<div class="a" style="left:473.5px;top:471.500px;width:.6px;height:7px;background:#1a1a1a"></div>
<div class="a" style="left:1px;top:479.8px;width:480.500px;height:8.400px;background:#2b2b2b;"></div>
<div class="a" style="left:1px;top:498.3px;width:480.500px;height:8.400px;background:#2b2b2b;"></div>
<div class="a" style="left:1px;top:507.3px;width:480.500px;height:8.400px;background:#2b2b2b;"></div>
<div class="a" style="left:1px;top:516.3px;width:480.500px;height:8.400px;background:#2b2b2b;"></div>
<div class="a" style="left:1px;top:525.3px;width:480.500px;height:8.400px;background:#2b2b2b;"></div>
<div class="a" style="left:1px;top:534.3px;width:480.500px;height:8.400px;background:#2b2b2b;"></div>
<div class="a" style="left:1px;top:543.3px;width:480.500px;height:8.400px;background:#2b2b2b;"></div>
<svg style="left:0;top:479px" width="482" height="74" viewBox="0 479 482 74"><path d="M3.600 484.0c1.500-2.200 4.500-2.200 6 0-1.500 2.200-4.500 2.200-6 0z" fill="#c8c8c8"/><circle cx="6.600" cy="484.0" r="1" fill="#2b2b2b"/><rect x="19" y="480.3" width="7.300" height="7.400" fill="#232323"/><rect x="27.300" y="480.3" width="7" height="7.400" fill="#232323"/><path d="M39.300 483.0l2 2 2-2" stroke="#b0b0b0" stroke-width=".700" fill="none"/><rect x="46.500" y="480.9" width="6.200" height="6.200" fill="#e8c4d0"/><rect x="73" y="482.0" width="4.600" height="4" rx=".500" fill="#c8c8c8"/><path d="M77.600 483.7l2.800-1.600v3.800l-2.800-1.600z" fill="#c8c8c8"/><path d="M261.5 483.8l1.700-2.500 1.700 2.500z" fill="#c8c8c8"/><path d="M259.9 484.4h6.600" stroke="#c8c8c8" stroke-width=".900"/><path d="M261.3 485.0v1.600M265.1 485.0v1.600M263.2 485.0v1.200" stroke="#c8c8c8" stroke-width=".900"/><rect x="315.700" y="480.2" width="7" height="7.600" fill="#242424" stroke="#5a5a5a" stroke-width=".500"/><path d="M319.200 482.0v2.500l-2 1.800M319.200 484.5l2 1.800" stroke="#c8c8c8" stroke-width=".600" fill="none"/><rect x="318.500" y="481.0" width="1.400" height="1.400" fill="#c8c8c8"/><path d="M386.500 484.0a2.600 2.600 0 1 0-2.600 2.600M386.500 484.0a1.200 1.200 0 1 0-1.200 1.200" stroke="#9a9a9a" stroke-width=".600" fill="none"/><rect x="391" y="480.2" width="46.500" height="7.600" fill="#1d1d1d"/><path d="M432 483.2l1.800 1.800 1.800-1.800" stroke="#b0b0b0" stroke-width=".700" fill="none"/><path d="M3.600 502.5c1.500-2.200 4.500-2.200 6 0-1.500 2.200-4.500 2.200-6 0z" fill="#c8c8c8"/><circle cx="6.600" cy="502.5" r="1" fill="#2b2b2b"/><rect x="19" y="498.8" width="7.300" height="7.400" fill="#232323"/><rect x="27.300" y="498.8" width="7" height="7.400" fill="#232323"/><path d="M40.500 500.5l2 2-2 2" stroke="#b0b0b0" stroke-width=".700" fill="none"/><rect x="46.500" y="499.4" width="6.200" height="6.200" fill="#f070d0"/><rect x="74" y="499.0" width="5.600" height="7" rx=".500" fill="#2a0a00" stroke="#7a3000" stroke-width=".400"/><path d="M75.200 504.9l1.600-4.400 1.600 4.400M75.800 503.5h2" stroke="#ff9a00" stroke-width=".800" fill="none"/><rect x="259.5" y="498.8" width="7.3" height="7.400" fill="#242424"/><rect x="267.5" y="498.8" width="7.2" height="7.400" fill="#242424"/><rect x="275.4" y="498.8" width="7.6" height="7.400" fill="#242424"/><rect x="299.7" y="498.8" width="7.2" height="7.400" fill="#242424"/><rect x="307.6" y="498.8" width="6.8" height="7.400" fill="#242424"/><path d="M261.5 502.3l1.700-2.500 1.700 2.500z" fill="#c8c8c8"/><path d="M259.9 502.9h6.600" stroke="#c8c8c8" stroke-width=".900"/><path d="M261.3 503.5v1.600M265.1 503.5v1.600M263.2 503.5v1.200" stroke="#c8c8c8" stroke-width=".900"/><circle cx="271" cy="502.5" r="1.400" fill="none" stroke="#c8c8c8" stroke-width=".800"/><path d="M271 499.6v1.200M271 504.2v1.200M268.200 502.5h1.200M272.600 502.5h1.200" stroke="#c8c8c8" stroke-width=".800"/><path d="M276.500 505.1l5.200-5.200" stroke="#c8c8c8" stroke-width=".900"/><rect x="315.700" y="498.7" width="7" height="7.600" fill="#242424" stroke="#5a5a5a" stroke-width=".500"/><path d="M317 501.5l2.200-1 2.200 1v2.400l-2.200 1-2.200-1zM317 501.5l2.200 1 2.200-1M319.200 502.5v2.400" stroke="#c8c8c8" stroke-width=".500" fill="none"/><path d="M386.500 502.5a2.600 2.600 0 1 0-2.600 2.600M386.500 502.5a1.200 1.200 0 1 0-1.200 1.200" stroke="#9a9a9a" stroke-width=".600" fill="none"/><rect x="391" y="498.7" width="46.500" height="7.600" fill="#1d1d1d"/><path d="M432 501.7l1.800 1.800 1.800-1.800" stroke="#b0b0b0" stroke-width=".700" fill="none"/><path d="M3.600 511.5c1.500-2.200 4.500-2.200 6 0-1.500 2.200-4.500 2.200-6 0z" fill="#c8c8c8"/><circle cx="6.600" cy="511.5" r="1" fill="#2b2b2b"/><rect x="19" y="507.8" width="7.300" height="7.400" fill="#232323"/><rect x="27.300" y="507.8" width="7" height="7.400" fill="#232323"/><path d="M40.500 509.5l2 2-2 2" stroke="#b0b0b0" stroke-width=".700" fill="none"/><rect x="46.500" y="508.4" width="6.200" height="6.200" fill="#f070d0"/><rect x="74" y="508.0" width="5.600" height="7" rx=".500" fill="#2a0a00" stroke="#7a3000" stroke-width=".400"/><path d="M75.200 513.9l1.600-4.400 1.600 4.400M75.800 512.5h2" stroke="#ff9a00" stroke-width=".800" fill="none"/><rect x="259.5" y="507.8" width="7.3" height="7.400" fill="#242424"/><rect x="267.5" y="507.8" width="7.2" height="7.400" fill="#242424"/><rect x="275.4" y="507.8" width="7.6" height="7.400" fill="#242424"/><rect x="299.7" y="507.8" width="7.2" height="7.400" fill="#242424"/><rect x="307.6" y="507.8" width="6.8" height="7.400" fill="#242424"/><path d="M261.5 511.3l1.700-2.500 1.700 2.500z" fill="#c8c8c8"/><path d="M259.9 511.9h6.600" stroke="#c8c8c8" stroke-width=".900"/><path d="M261.3 512.5v1.600M265.1 512.5v1.600M263.2 512.5v1.200" stroke="#c8c8c8" stroke-width=".900"/><circle cx="271" cy="511.5" r="1.400" fill="none" stroke="#c8c8c8" stroke-width=".800"/><path d="M271 508.6v1.200M271 513.2v1.200M268.200 511.5h1.200M272.600 511.5h1.200" stroke="#c8c8c8" stroke-width=".800"/><path d="M276.500 514.1l5.200-5.200" stroke="#c8c8c8" stroke-width=".900"/><rect x="315.700" y="507.7" width="7" height="7.600" fill="#242424" stroke="#5a5a5a" stroke-width=".500"/><path d="M317 510.5l2.200-1 2.200 1v2.400l-2.200 1-2.200-1zM317 510.5l2.200 1 2.200-1M319.200 511.5v2.400" stroke="#c8c8c8" stroke-width=".500" fill="none"/><path d="M386.500 511.5a2.600 2.600 0 1 0-2.600 2.600M386.500 511.5a1.200 1.200 0 1 0-1.200 1.200" stroke="#9a9a9a" stroke-width=".600" fill="none"/><rect x="391" y="507.7" width="46.500" height="7.600" fill="#1d1d1d"/><path d="M432 510.7l1.800 1.800 1.800-1.800" stroke="#b0b0b0" stroke-width=".700" fill="none"/><path d="M3.600 520.5c1.500-2.200 4.500-2.200 6 0-1.500 2.200-4.500 2.200-6 0z" fill="#c8c8c8"/><circle cx="6.600" cy="520.5" r="1" fill="#2b2b2b"/><rect x="19" y="516.8" width="7.300" height="7.400" fill="#232323"/><rect x="27.300" y="516.8" width="7" height="7.400" fill="#232323"/><path d="M40.500 518.5l2 2-2 2" stroke="#b0b0b0" stroke-width=".700" fill="none"/><rect x="46.500" y="517.4" width="6.200" height="6.200" fill="#2c4a2c"/><rect x="74" y="517.0" width="5.600" height="7" rx=".500" fill="#2a0a00" stroke="#7a3000" stroke-width=".400"/><path d="M75.200 522.9l1.600-4.400 1.600 4.400M75.800 521.5h2" stroke="#ff9a00" stroke-width=".800" fill="none"/><rect x="259.5" y="516.8" width="7.3" height="7.400" fill="#242424"/><rect x="267.5" y="516.8" width="7.2" height="7.400" fill="#242424"/><rect x="275.4" y="516.8" width="7.6" height="7.400" fill="#242424"/><rect x="299.7" y="516.8" width="7.2" height="7.400" fill="#242424"/><rect x="307.6" y="516.8" width="6.8" height="7.400" fill="#242424"/><path d="M261.5 520.3l1.700-2.500 1.700 2.500z" fill="#c8c8c8"/><path d="M259.9 520.9h6.600" stroke="#c8c8c8" stroke-width=".900"/><path d="M261.3 521.5v1.600M265.1 521.5v1.600M263.2 521.5v1.200" stroke="#c8c8c8" stroke-width=".900"/><circle cx="271" cy="520.5" r="1.400" fill="none" stroke="#c8c8c8" stroke-width=".800"/><path d="M271 517.6v1.200M271 522.2v1.200M268.200 520.5h1.200M272.600 520.5h1.200" stroke="#c8c8c8" stroke-width=".800"/><path d="M276.500 523.1l5.200-5.200" stroke="#c8c8c8" stroke-width=".900"/><rect x="315.700" y="516.7" width="7" height="7.600" fill="#242424" stroke="#5a5a5a" stroke-width=".500"/><path d="M317 519.5l2.200-1 2.200 1v2.400l-2.200 1-2.200-1zM317 519.5l2.200 1 2.200-1M319.200 520.5v2.400" stroke="#c8c8c8" stroke-width=".500" fill="none"/><path d="M386.500 520.5a2.600 2.600 0 1 0-2.600 2.600M386.500 520.5a1.200 1.200 0 1 0-1.200 1.200" stroke="#9a9a9a" stroke-width=".600" fill="none"/><rect x="391" y="516.7" width="46.500" height="7.600" fill="#1d1d1d"/><path d="M432 519.7l1.800 1.800 1.800-1.800" stroke="#b0b0b0" stroke-width=".700" fill="none"/><path d="M3.600 529.5c1.500-2.200 4.500-2.200 6 0-1.500 2.200-4.500 2.200-6 0z" fill="#c8c8c8"/><circle cx="6.600" cy="529.5" r="1" fill="#2b2b2b"/><rect x="19" y="525.8" width="7.300" height="7.400" fill="#232323"/><rect x="27.300" y="525.8" width="7" height="7.400" fill="#232323"/><path d="M40.500 527.5l2 2-2 2" stroke="#b0b0b0" stroke-width=".700" fill="none"/><rect x="46.500" y="526.4" width="6.200" height="6.200" fill="#b4b4e0"/><rect x="74" y="526.0" width="5.600" height="7" rx=".500" fill="#2a0a00" stroke="#7a3000" stroke-width=".400"/><path d="M75.200 531.9l1.600-4.400 1.600 4.400M75.800 530.5h2" stroke="#ff9a00" stroke-width=".800" fill="none"/><rect x="259.5" y="525.8" width="7.3" height="7.400" fill="#242424"/><rect x="267.5" y="525.8" width="7.2" height="7.400" fill="#242424"/><rect x="275.4" y="525.8" width="7.6" height="7.400" fill="#242424"/><rect x="299.7" y="525.8" width="7.2" height="7.400" fill="#242424"/><rect x="307.6" y="525.8" width="6.8" height="7.400" fill="#242424"/><path d="M261.5 529.3l1.700-2.500 1.700 2.500z" fill="#c8c8c8"/><path d="M259.9 529.9h6.600" stroke="#c8c8c8" stroke-width=".900"/><path d="M261.3 530.5v1.600M265.1 530.5v1.600M263.2 530.5v1.200" stroke="#c8c8c8" stroke-width=".900"/><circle cx="271" cy="529.5" r="1.400" fill="none" stroke="#c8c8c8" stroke-width=".800"/><path d="M271 526.6v1.200M271 531.2v1.200M268.200 529.5h1.200M272.600 529.5h1.200" stroke="#c8c8c8" stroke-width=".800"/><path d="M276.500 532.1l5.200-5.200" stroke="#c8c8c8" stroke-width=".900"/><rect x="315.700" y="525.7" width="7" height="7.600" fill="#242424" stroke="#5a5a5a" stroke-width=".500"/><path d="M317 528.5l2.200-1 2.200 1v2.400l-2.200 1-2.200-1zM317 528.5l2.200 1 2.200-1M319.200 529.5v2.400" stroke="#c8c8c8" stroke-width=".500" fill="none"/><path d="M386.500 529.5a2.600 2.600 0 1 0-2.600 2.600M386.500 529.5a1.200 1.200 0 1 0-1.200 1.200" stroke="#9a9a9a" stroke-width=".600" fill="none"/><rect x="391" y="525.7" width="46.500" height="7.600" fill="#1d1d1d"/><path d="M432 528.7l1.800 1.800 1.800-1.800" stroke="#b0b0b0" stroke-width=".700" fill="none"/><path d="M3.600 538.5c1.500-2.200 4.500-2.200 6 0-1.500 2.200-4.500 2.200-6 0z" fill="#c8c8c8"/><circle cx="6.600" cy="538.5" r="1" fill="#2b2b2b"/><rect x="19" y="534.8" width="7.300" height="7.400" fill="#232323"/><rect x="27.300" y="534.8" width="7" height="7.400" fill="#232323"/><path d="M40.500 536.5l2 2-2 2" stroke="#b0b0b0" stroke-width=".700" fill="none"/><rect x="46.500" y="535.4" width="6.200" height="6.200" fill="#4cb050"/><rect x="74" y="535.0" width="5.600" height="7" rx=".500" fill="#2a0a00" stroke="#7a3000" stroke-width=".400"/><path d="M75.200 540.9l1.600-4.400 1.600 4.400M75.800 539.5h2" stroke="#ff9a00" stroke-width=".800" fill="none"/><rect x="259.5" y="534.8" width="7.3" height="7.400" fill="#242424"/><rect x="267.5" y="534.8" width="7.2" height="7.400" fill="#242424"/><rect x="275.4" y="534.8" width="7.6" height="7.400" fill="#242424"/><rect x="299.7" y="534.8" width="7.2" height="7.400" fill="#242424"/><rect x="307.6" y="534.8" width="6.8" height="7.400" fill="#242424"/><path d="M261.5 538.3l1.700-2.500 1.700 2.500z" fill="#c8c8c8"/><path d="M259.9 538.9h6.600" stroke="#c8c8c8" stroke-width=".900"/><path d="M261.3 539.5v1.600M265.1 539.5v1.600M263.2 539.5v1.200" stroke="#c8c8c8" stroke-width=".900"/><circle cx="271" cy="538.5" r="1.400" fill="none" stroke="#c8c8c8" stroke-width=".800"/><path d="M271 535.6v1.200M271 540.2v1.200M268.200 538.5h1.200M272.600 538.5h1.200" stroke="#c8c8c8" stroke-width=".800"/><path d="M276.500 541.1l5.200-5.200" stroke="#c8c8c8" stroke-width=".900"/><rect x="315.700" y="534.7" width="7" height="7.600" fill="#242424" stroke="#5a5a5a" stroke-width=".500"/><path d="M317 537.5l2.200-1 2.200 1v2.400l-2.200 1-2.200-1zM317 537.5l2.200 1 2.200-1M319.200 538.5v2.400" stroke="#c8c8c8" stroke-width=".500" fill="none"/><path d="M386.500 538.5a2.600 2.600 0 1 0-2.600 2.600M386.500 538.5a1.200 1.200 0 1 0-1.200 1.200" stroke="#9a9a9a" stroke-width=".600" fill="none"/><rect x="391" y="534.7" width="46.500" height="7.600" fill="#1d1d1d"/><path d="M432 537.7l1.800 1.800 1.800-1.800" stroke="#b0b0b0" stroke-width=".700" fill="none"/><path d="M3.600 547.5c1.500-2.200 4.500-2.200 6 0-1.500 2.200-4.500 2.200-6 0z" fill="#c8c8c8"/><circle cx="6.600" cy="547.5" r="1" fill="#2b2b2b"/><rect x="19" y="543.8" width="7.300" height="7.400" fill="#232323"/><rect x="27.300" y="543.8" width="7" height="7.400" fill="#232323"/><path d="M40.500 545.5l2 2-2 2" stroke="#b0b0b0" stroke-width=".700" fill="none"/><rect x="46.500" y="544.4" width="6.200" height="6.200" fill="#f0960c"/><rect x="72.500" y="544.2" width="8" height="6.600" rx=".500" fill="#bdbdbd"/><rect x="73.500" y="545.2" width="6" height="4.600" fill="#6d7d8c"/><circle cx="75.700" cy="546.9" r="1" fill="#d33"/><circle cx="77.200" cy="546.9" r="1" fill="#3a3"/><circle cx="76.500" cy="548.2" r="1" fill="#36c"/><rect x="259.5" y="543.8" width="7.3" height="7.400" fill="#242424"/><rect x="267.5" y="543.8" width="7.2" height="7.400" fill="#242424"/><rect x="275.4" y="543.8" width="7.6" height="7.400" fill="#242424"/><rect x="299.7" y="543.8" width="7.2" height="7.400" fill="#242424"/><rect x="307.6" y="543.8" width="6.8" height="7.400" fill="#242424"/><path d="M261.5 547.3l1.700-2.500 1.700 2.500z" fill="#c8c8c8"/><path d="M259.9 547.9h6.600" stroke="#c8c8c8" stroke-width=".900"/><path d="M261.3 548.5v1.600M265.1 548.5v1.600M263.2 548.5v1.200" stroke="#c8c8c8" stroke-width=".900"/><circle cx="271" cy="547.5" r="1.400" fill="none" stroke="#c8c8c8" stroke-width=".800"/><path d="M271 544.6v1.200M271 549.2v1.200M268.200 547.5h1.200M272.600 547.5h1.200" stroke="#c8c8c8" stroke-width=".800"/><path d="M278 547.5h2.400M302 547.5h2.400" stroke="#c8c8c8" stroke-width=".900"/><rect x="315.700" y="543.7" width="7" height="7.600" fill="#242424" stroke="#5a5a5a" stroke-width=".500"/><rect x="317" y="545.3" width="4.400" height="4.400" fill="none" stroke="#c8c8c8" stroke-width=".500"/><path d="M318 548.0h.8M319.600 548.0h.8" stroke="#c8c8c8" stroke-width=".600"/><path d="M386.500 547.5a2.600 2.600 0 1 0-2.600 2.600M386.500 547.5a1.200 1.200 0 1 0-1.200 1.200" stroke="#9a9a9a" stroke-width=".600" fill="none"/><rect x="391" y="543.7" width="46.500" height="7.600" fill="#1d1d1d"/><path d="M432 546.7l1.800 1.800 1.800-1.800" stroke="#b0b0b0" stroke-width=".700" fill="none"/><circle cx="68" cy="493.6" r="2.500" fill="none" stroke="#b0b0b0" stroke-width=".700"/><path d="M67 490.3h2M68 490.3v1" stroke="#b0b0b0" stroke-width=".700"/><path d="M393.500 493.3a2.600 2.600 0 1 0-2.600 2.600M393.500 493.3a1.200 1.200 0 1 0-1.200 1.200" stroke="#9a9a9a" stroke-width=".600" fill="none"/></svg>
<div class="t" style="left:57.60px;top:480.20px;color:#c8c8c8;font-size:6.00px;letter-spacing:-0.120px;">1</div>
<div class="t" style="left:84.00px;top:480.50px;color:#d4d4d4;font-size:6.50px;letter-spacing:-0.336px;">Kamera 1</div>
<div class="t" style="left:395.00px;top:480.50px;color:#d4d4d4;font-size:6.50px;letter-spacing:-0.152px;">Ohne</div>
<div class="t" style="left:445.00px;top:480.50px;color:#2d8ceb;font-size:6.50px;letter-spacing:-0.591px;">100,0%</div>
<div class="t" style="left:57.60px;top:498.70px;color:#c8c8c8;font-size:6.00px;letter-spacing:-0.120px;">2</div>
<div class="t" style="left:84.00px;top:499.00px;color:#d4d4d4;font-size:6.50px;letter-spacing:-0.176px;">Foreground Flowers</div>
<div class="t" style="left:395.00px;top:499.00px;color:#d4d4d4;font-size:6.50px;letter-spacing:-0.152px;">Ohne</div>
<div class="t" style="left:445.00px;top:499.00px;color:#2d8ceb;font-size:6.50px;letter-spacing:-0.591px;">100,0%</div>
<div class="t" style="left:57.60px;top:507.70px;color:#c8c8c8;font-size:6.00px;letter-spacing:-0.120px;">3</div>
<div class="t" style="left:84.00px;top:508.00px;color:#d4d4d4;font-size:6.50px;letter-spacing:-0.192px;">Background Flowers</div>
<div class="t" style="left:395.00px;top:508.00px;color:#d4d4d4;font-size:6.50px;letter-spacing:-0.152px;">Ohne</div>
<div class="t" style="left:445.00px;top:508.00px;color:#2d8ceb;font-size:6.50px;letter-spacing:-0.591px;">100,0%</div>
<div class="t" style="left:57.60px;top:516.70px;color:#c8c8c8;font-size:6.00px;letter-spacing:-0.120px;">4</div>
<div class="t" style="left:84.00px;top:517.00px;color:#d4d4d4;font-size:6.50px;letter-spacing:-0.118px;">Foreground Hills</div>
<div class="t" style="left:395.00px;top:517.00px;color:#d4d4d4;font-size:6.50px;letter-spacing:-0.152px;">Ohne</div>
<div class="t" style="left:445.00px;top:517.00px;color:#2d8ceb;font-size:6.50px;letter-spacing:-0.591px;">100,0%</div>
<div class="t" style="left:57.60px;top:525.70px;color:#c8c8c8;font-size:6.00px;letter-spacing:-0.120px;">5</div>
<div class="t" style="left:84.00px;top:526.00px;color:#d4d4d4;font-size:6.50px;letter-spacing:-0.170px;">Hippies</div>
<div class="t" style="left:395.00px;top:526.00px;color:#d4d4d4;font-size:6.50px;letter-spacing:-0.152px;">Ohne</div>
<div class="t" style="left:445.00px;top:526.00px;color:#2d8ceb;font-size:6.50px;letter-spacing:-0.591px;">100,0%</div>
<div class="t" style="left:57.60px;top:534.70px;color:#c8c8c8;font-size:6.00px;letter-spacing:-0.120px;">6</div>
<div class="t" style="left:84.00px;top:535.00px;color:#d4d4d4;font-size:6.50px;letter-spacing:-0.053px;">Midground Hills</div>
<div class="t" style="left:395.00px;top:535.00px;color:#d4d4d4;font-size:6.50px;letter-spacing:-0.152px;">Ohne</div>
<div class="t" style="left:445.00px;top:535.00px;color:#2d8ceb;font-size:6.50px;letter-spacing:-0.591px;">100,0%</div>
<div class="t" style="left:57.60px;top:543.70px;color:#c8c8c8;font-size:6.00px;letter-spacing:-0.120px;">7</div>
<div class="t" style="left:84.00px;top:544.00px;color:#d4d4d4;font-size:6.50px;letter-spacing:-0.084px;">[Background]</div>
<div class="t" style="left:395.00px;top:544.00px;color:#d4d4d4;font-size:6.50px;letter-spacing:-0.152px;">Ohne</div>
<div class="t" style="left:445.00px;top:544.00px;color:#2d8ceb;font-size:6.50px;letter-spacing:-0.591px;">100,0%</div>
<div class="t" style="left:76.00px;top:489.90px;color:#b4b4b4;font-size:6.50px;letter-spacing:-0.203px;">Position</div>
<div class="t" style="left:260.00px;top:489.90px;color:#2d8ceb;font-size:6.50px;letter-spacing:-0.382px;">960,0 ,540,0 ,-2666,7</div>
<div class="a" style="left:481.500px;top:450.500px;width:1.500px;height:166.500px;background:#161616;"></div>
<div class="a" style="left:483px;top:450.500px;width:371px;height:157.500px;background:#222;"></div>
<div class="a" style="left:486px;top:479.500px;width:355.500px;height:128.500px;background:#323232;"></div>
<div class="a" style="left:841.700px;top:479.500px;width:4px;height:128.500px;background:#292929;"></div>
<svg style="left:0;top:0" width="1024" height="618" viewBox="0 0 1024 618"><rect x="485" y="454.100" width="357" height="3.700" rx="1" fill="#747474"/><path d="M484.500 453.500h2v5h-2a1.500 1.500 0 0 1-1.500-1.500v-2a1.500 1.500 0 0 1 1.500-1.500z" fill="#2d8ceb"/><path d="M843.500 453.500h-2v5h2a1.500 1.500 0 0 0 1.500-1.500v-2a1.500 1.500 0 0 0-1.500-1.500z" fill="#2d8ceb"/><path d="M486.2 465.500V468.500" stroke="#8a8a8a" stroke-width=".600"/><path d="M521.8 465.500V468.500" stroke="#8a8a8a" stroke-width=".600"/><path d="M557.3 465.500V468.500" stroke="#8a8a8a" stroke-width=".600"/><path d="M592.9 465.500V468.500" stroke="#8a8a8a" stroke-width=".600"/><path d="M628.4 465.500V468.500" stroke="#8a8a8a" stroke-width=".600"/><path d="M664.0 465.500V468.500" stroke="#8a8a8a" stroke-width=".600"/><path d="M699.6 465.500V468.500" stroke="#8a8a8a" stroke-width=".600"/><path d="M735.1 465.500V468.500" stroke="#8a8a8a" stroke-width=".600"/><path d="M770.7 465.500V468.500" stroke="#8a8a8a" stroke-width=".600"/><path d="M806.2 465.500V468.500" stroke="#8a8a8a" stroke-width=".600"/><path d="M841.8 465.500V468.500" stroke="#8a8a8a" stroke-width=".600"/><rect x="486" y="469.200" width="355.700" height="8" fill="#666666"/><rect x="486" y="477.500" width="355.700" height="1.500" fill="#1fc01f"/><rect x="483.500" y="469.200" width="2.500" height="8" rx=".800" fill="#2d8ceb"/><rect x="841.700" y="469.200" width="3" height="8.200" rx=".800" fill="#2d8ceb"/><rect x="486" y="480.3" width="355.500" height="8.300" fill="#948288"/><rect x="486" y="498.3" width="355.500" height="8.300" fill="#9c5a8e"/><rect x="486" y="507.3" width="355.500" height="8.300" fill="#9c5a8e"/><rect x="486" y="516.3" width="355.500" height="8.300" fill="#2f4231"/><rect x="486" y="525.3" width="355.500" height="8.300" fill="#7c7c8e"/><rect x="486" y="534.3" width="355.500" height="8.300" fill="#47784b"/><path d="M486 551.600V545.300Q486 543.300 488 543.300H839.500Q841.500 543.300 841.500 545.300V551.600Z" fill="#a57124"/><rect x="486" y="489" width="355.500" height="8.600" fill="#2f2f2f"/><path d="M486 488.8H841.500" stroke="#262626" stroke-width=".600"/><path d="M486 497.8H841.500" stroke="#262626" stroke-width=".600"/><path d="M486 506.8H841.500" stroke="#262626" stroke-width=".600"/><path d="M486 515.8H841.500" stroke="#262626" stroke-width=".600"/><path d="M486 524.8H841.500" stroke="#262626" stroke-width=".600"/><path d="M486 533.8H841.500" stroke="#262626" stroke-width=".600"/><path d="M486 542.8H841.500" stroke="#262626" stroke-width=".600"/><path d="M486 551.8H841.500" stroke="#262626" stroke-width=".600"/><path d="M485 490.500h2.400M486.200 490.500v6M485 496.500h2.400" stroke="#d0d0d0" stroke-width=".700" fill="none"/><path d="M486.100 466V608" stroke="#2d78c8" stroke-width=".700"/><path d="M483.200 460h6v3.500l-3 3.200-3-3.200z" fill="#2d8ceb"/><path d="M848.200 470.500h4.600v4l-2.300 2.200-2.300-2.200z" fill="#d0d0d0"/><path d="M847.500 486l2.500-2.500 3 .5.500 3-2.500 2.500z" fill="#d0d0d0"/><circle cx="851.800" cy="485.200" r=".700" fill="#232323"/><path d="M847.500 483.500a2.500 2.500 0 0 1 2-1.500" stroke="#d0d0d0" stroke-width=".500" fill="none"/><rect x="1.300" y="608" width="852.700" height="9" fill="#222"/><path d="M1.300 608H854" stroke="#161616" stroke-width=".800"/><rect x="481.500" y="608" width="1.500" height="9" fill="#161616"/><rect x="2.500" y="609.300" width="9" height="7.400" fill="#111"/><path d="M5 610.500l3 .5 2.500 3-2 2-3-2.500z" fill="#2d8ceb"/><rect x="15" y="610.300" width="3.800" height="3.800" rx=".500" fill="none" stroke="#c8c8c8" stroke-width=".700"/><rect x="16.800" y="612" width="3.800" height="3.800" rx=".500" fill="#232323" stroke="#c8c8c8" stroke-width=".700"/><rect x="23.500" y="609.300" width="9" height="7.400" fill="#111"/><path d="M27 610.300c-1.200 0-.6 2.600-1.600 2.700 1 .1 .4 2.700 1.600 2.700M29.200 610.300c1.200 0 .6 2.600 1.600 2.700-1 .1-.4 2.700-1.600 2.700" stroke="#2d8ceb" stroke-width=".800" fill="none"/><path d="M35.300 611h3.600l1 1.200h1.600v3.400h-6.200z" fill="#c8c8c8"/><path d="M39.500 610.500l1.500 .3-.8 1" stroke="#c8c8c8" stroke-width=".500" fill="none"/><rect x="259" y="609.300" width="118.500" height="7.200" fill="#1f1f1f" stroke="#2e2e2e" stroke-width=".500"/><path d="M485.300 614.200l1.800-1.800 1.800 1.800z" fill="#c8c8c8"/><path d="M500.500 613.500H521" stroke="#444" stroke-width=".800"/><circle cx="498.500" cy="613.500" r="1.700" fill="#232323" stroke="#c8c8c8" stroke-width=".800"/><path d="M527.500 615l2-2.600 1.500 1.600 1.300-1.600 2 2.600z" fill="#c8c8c8"/></svg>
<div class="t" style="left:488.50px;top:459.10px;color:#b4b4b4;font-size:6.80px;letter-spacing:-1.323px;">00s</div>
<div class="t" style="left:516.76px;top:459.10px;color:#b4b4b4;font-size:6.80px;letter-spacing:-0.723px;">01s</div>
<div class="t" style="left:552.32px;top:459.10px;color:#b4b4b4;font-size:6.80px;letter-spacing:-0.723px;">02s</div>
<div class="t" style="left:587.88px;top:459.10px;color:#b4b4b4;font-size:6.80px;letter-spacing:-0.723px;">03s</div>
<div class="t" style="left:623.44px;top:459.10px;color:#b4b4b4;font-size:6.80px;letter-spacing:-0.723px;">04s</div>
<div class="t" style="left:659.00px;top:459.10px;color:#b4b4b4;font-size:6.80px;letter-spacing:-0.723px;">05s</div>
<div class="t" style="left:694.56px;top:459.10px;color:#b4b4b4;font-size:6.80px;letter-spacing:-0.723px;">06s</div>
<div class="t" style="left:730.12px;top:459.10px;color:#b4b4b4;font-size:6.80px;letter-spacing:-0.723px;">07s</div>
<div class="t" style="left:765.68px;top:459.10px;color:#b4b4b4;font-size:6.80px;letter-spacing:-0.723px;">08s</div>
<div class="t" style="left:801.24px;top:459.10px;color:#b4b4b4;font-size:6.80px;letter-spacing:-0.723px;">09s</div>
<div class="t" style="left:837.30px;top:459.10px;color:#b4b4b4;font-size:6.80px;letter-spacing:-0.723px;">10s</div>
<div class="t" style="left:57.00px;top:609.30px;color:#a8a8a8;font-size:6.30px;letter-spacing:-0.226px;">Zeit für das Frame-Rendering:</div>
<div class="t" style="left:138.50px;top:609.30px;color:#3cc8a0;font-size:6.30px;letter-spacing:-0.402px;">13ms</div>
<div class="t" style="left:300.00px;top:609.30px;color:#8a8a8a;font-size:6.30px;letter-spacing:-0.154px;">Schalter/Modi</div>
</body></html>
